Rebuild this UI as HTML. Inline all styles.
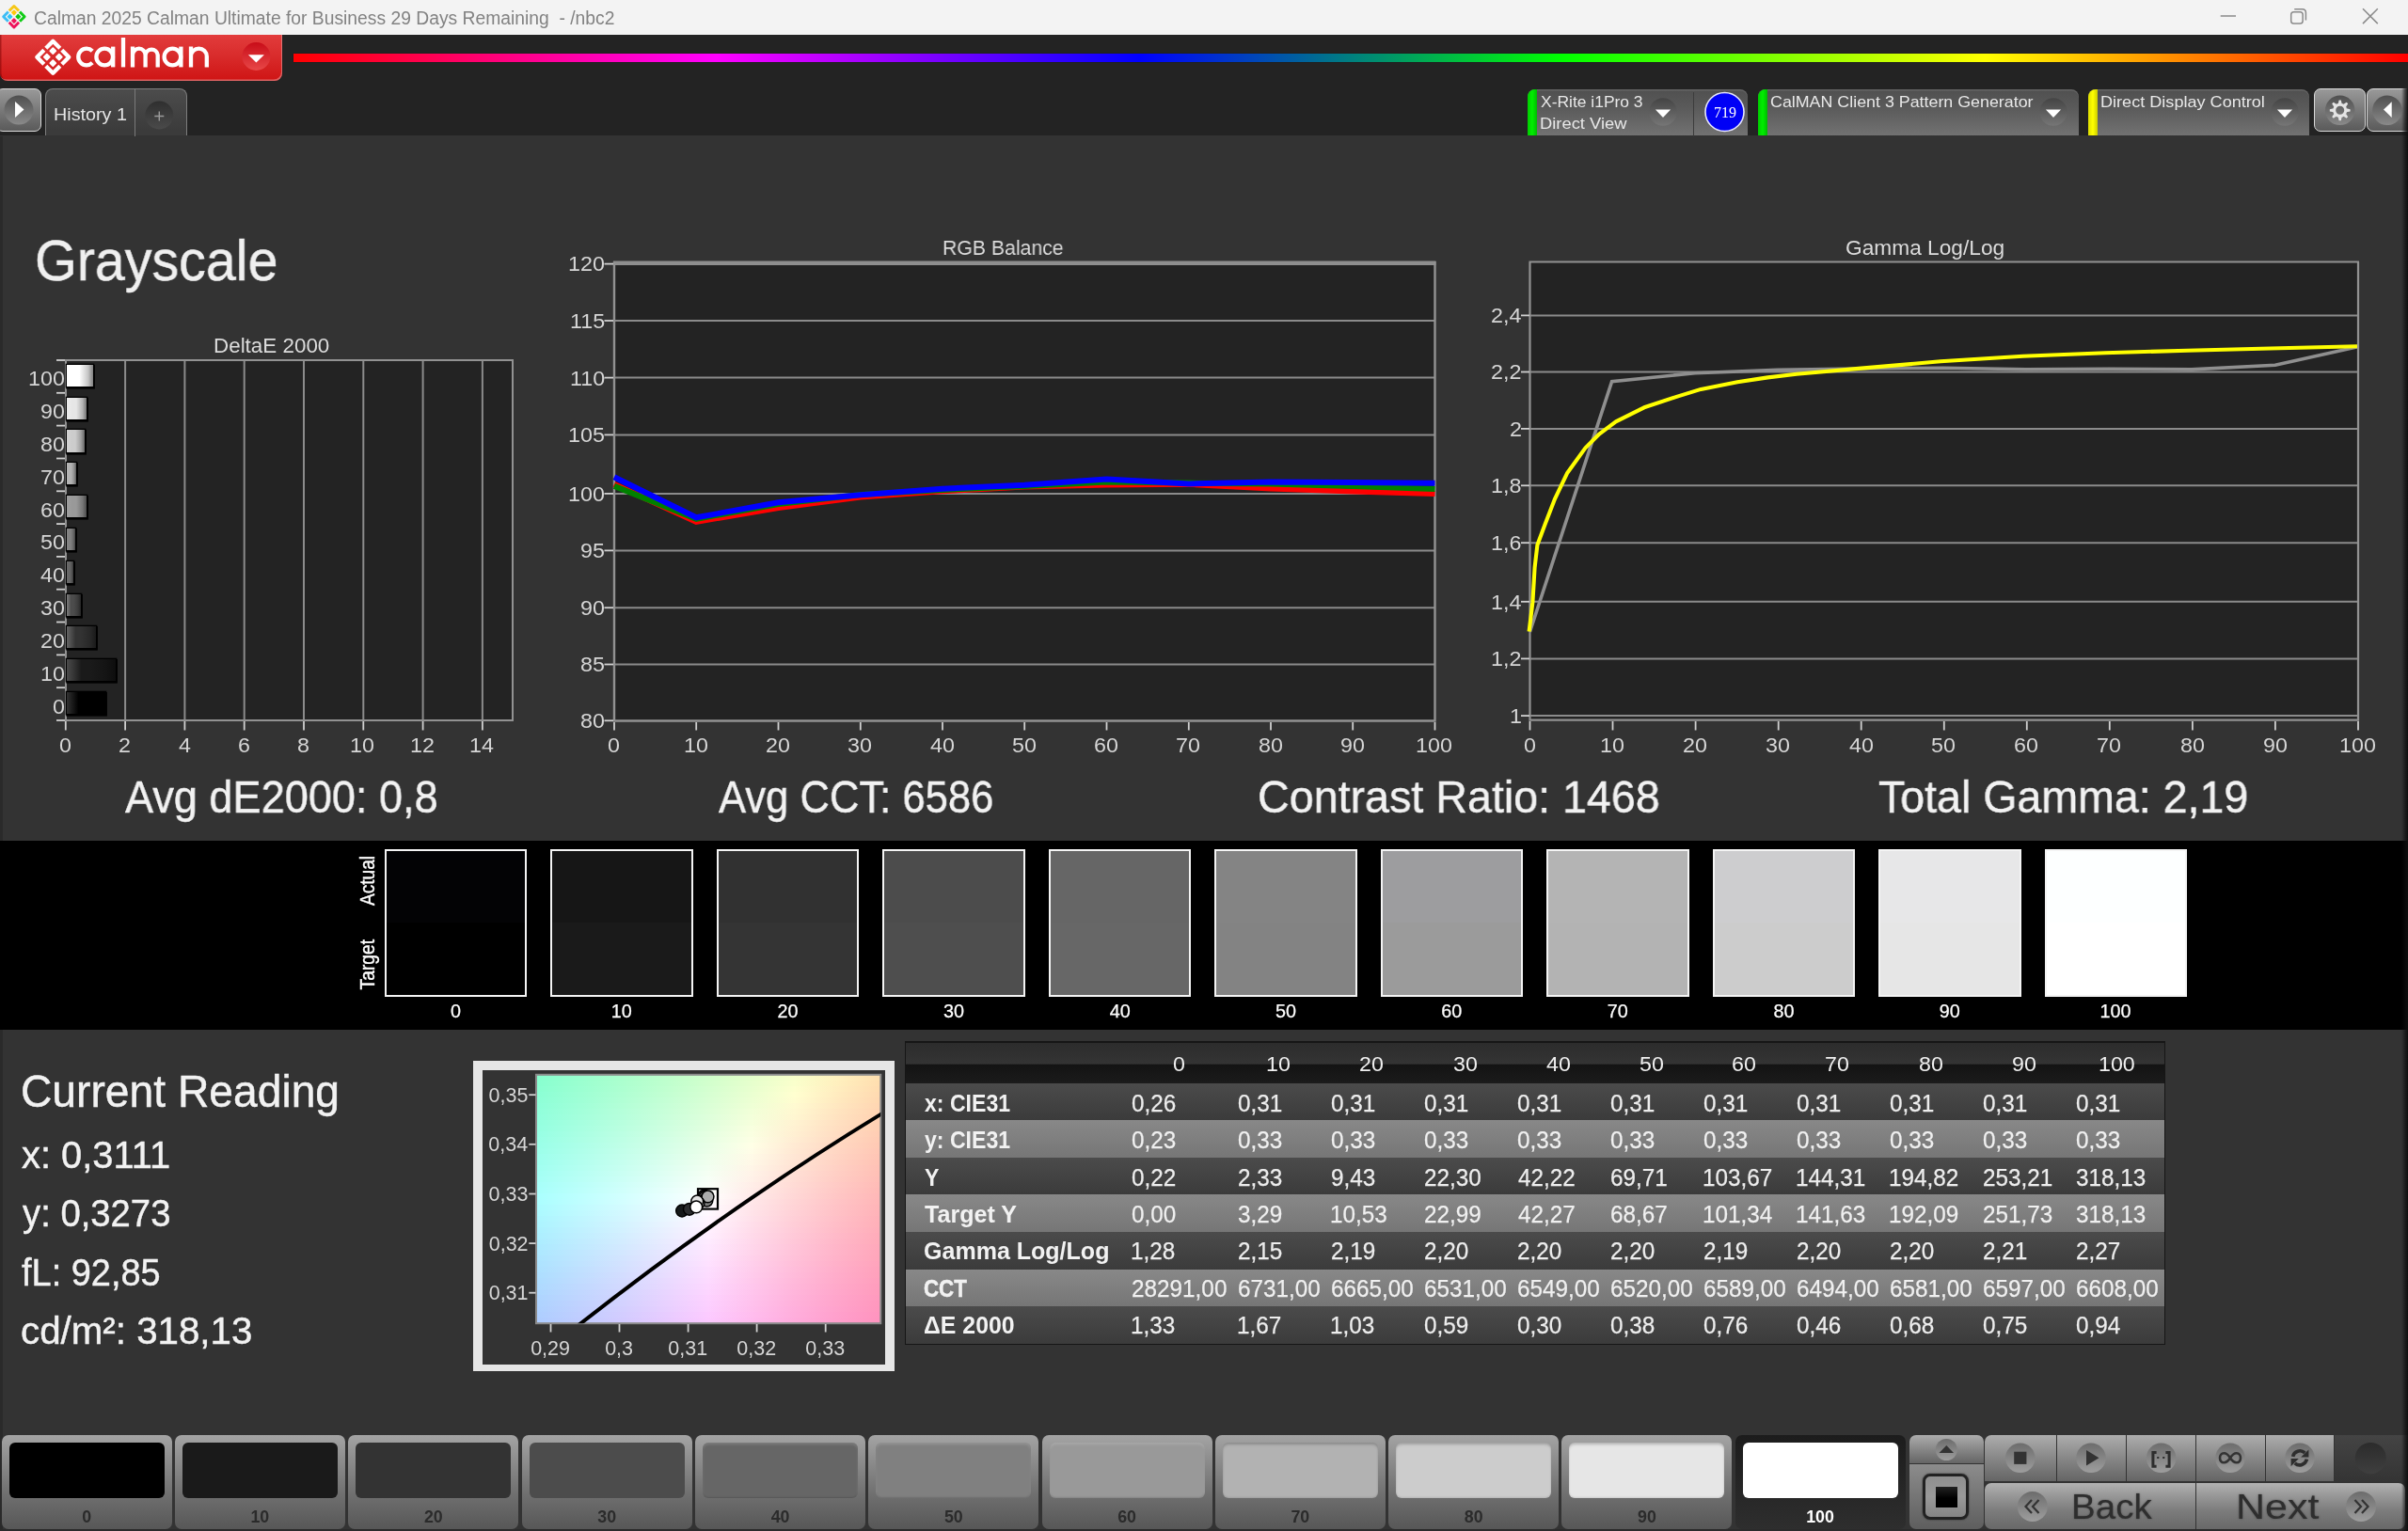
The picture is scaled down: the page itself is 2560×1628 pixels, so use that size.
<!DOCTYPE html>
<html><head><meta charset="utf-8"><title>Calman</title>
<style>
html,body{margin:0;padding:0;}
body{width:2560px;height:1628px;background:#333;overflow:hidden;position:relative;font-family:"Liberation Sans", sans-serif;}
div,svg,span.t{position:absolute;}
div div{position:absolute;}
svg{overflow:visible;}
span.t{white-space:pre;line-height:1;transform-origin:0 0;}
</style></head><body><div id="w" style="left:0;top:0;width:2560px;height:1628px;will-change:transform;overflow:hidden;">
<div style="left:0px;top:0px;width:2560px;height:37px;background:#f3f3f3;"></div>
<svg style="left:0;top:0" width="32" height="37" viewBox="0 0 32 37"><g transform="translate(14.9,17.7) rotate(45)" fill="none" stroke-width="2.9" stroke-linejoin="round" stroke-linecap="butt">
<path d="M-0.7,-7.95 H-7.95 V-0.7" stroke="#f6c715"/><rect x="-5.3" y="-5.3" width="4.4" height="4.4" rx="0.7" fill="#ffc90a"/>
<path d="M0.7,-7.95 H7.95 V-0.7" stroke="#10cc16"/><rect x="0.9" y="-5.3" width="4.4" height="4.4" rx="0.7" fill="#0ec612"/>
<path d="M7.95,0.7 V7.95 H0.7" stroke="#ee1058"/><rect x="0.9" y="0.9" width="4.4" height="4.4" rx="0.7" fill="#f01459"/>
<path d="M-7.95,0.7 V7.95 H-0.7" stroke="#3dbdf5"/><rect x="-5.3" y="0.9" width="4.4" height="4.4" rx="0.7" fill="#2ec4fa"/>
</g></svg>
<span class="t" style="left:35.84px;top:10px;font-size:19.6px;color:#828282;transform:scaleX(0.9843);">Calman 2025 Calman Ultimate for Business 29 Days Remaining  - /nbc2</span>
<svg style="left:2340px;top:0" width="220" height="37" viewBox="2340 0 220 37" fill="none" stroke="#8a8a8a" stroke-width="1.5">
<path d="M2360.7,17 H2377"/>
<rect x="2435.7" y="12.7" width="12.4" height="12.4" rx="2.8"/>
<path d="M2439.2,9.7 H2447.6 Q2451.4,9.7 2451.4,13.5 V21.5"/>
<path d="M2512,9.3 L2527.8,25.1 M2527.8,9.3 L2512,25.1"/>
</svg>
<div style="left:0px;top:37px;width:2560px;height:107.2px;background:#232323;"></div>
<div style="left:0px;top:37px;width:300px;height:48.5px;background:linear-gradient(#e23c3c 0%,#d92c2c 45%,#cf1414 100%);border-radius:0 0 8px 8px;box-shadow:inset -1px -1.5px 0 rgba(235,175,175,.5), inset 1.5px 0 0 rgba(120,0,0,.5);"></div>
<svg style="left:30px;top:37px" width="270" height="49" viewBox="30 37 270 49">
<g transform="translate(56.3,60.7) rotate(45)" stroke="#fff" fill="none" stroke-width="4.3" stroke-linecap="butt" stroke-linejoin="round">
<path d="M-1.4,-12 H-12 V-1.4 M1.4,-12 H12 V-1.4 M-12,1.4 V12 H-1.4 M12,1.4 V12 H1.4"/>
<g fill="#fff" stroke="none"><rect x="-7.6" y="-7.6" width="6" height="6" rx="0.9"/><rect x="1.6" y="-7.6" width="6" height="6" rx="0.9"/><rect x="-7.6" y="1.6" width="6" height="6" rx="0.9"/><rect x="1.6" y="1.6" width="6" height="6" rx="0.9"/></g>
</g>
<g stroke="#fff" fill="none" stroke-width="4.3" stroke-linecap="butt">
<path d="M98.2,54.2 A8.8,8.8 0 1 0 98.2,66.8"/>
<circle cx="111.2" cy="60.5" r="8.8"/><path d="M120.2,49.6 V71.4"/>
<path d="M131,40 V71.4"/>
<path d="M141,49.6 V71.4 M141,58.5 A6.8,6.8 0 0 1 154.6,58.5 V71.4 M154.6,58.5 A6.6,6.6 0 0 1 167.7,58.5 V71.4"/>
<circle cx="183.4" cy="60.5" r="8.8"/><path d="M192.4,49.6 V71.4"/>
<path d="M203,49.6 V71.4 M203,60 A8.4,8.4 0 0 1 219.8,60 V71.4"/>
</g>
<defs><linearGradient id="rdd" x1="0" y1="0" x2="0" y2="1"><stop offset="0" stop-color="#c80c18"/><stop offset="1" stop-color="#e84848"/></linearGradient></defs>
<circle cx="272.4" cy="60" r="15" fill="url(#rdd)"/>
<path d="M263.9,58.2 H280.9 L272.4,66.6 Z" fill="#fff"/>
</svg>
<div style="left:312px;top:57px;width:2248px;height:9px;background:linear-gradient(to right,#f00 0%,#f0f 20%,#00f 40%,#0f0 60%,#ff0 80%,#f00 100%);box-shadow:0 0 1px rgba(0,0,0,.6);"></div>
<div style="left:-4px;top:94.3px;width:48.2px;height:45.8px;background:linear-gradient(#999,#5a5a5a);border:1.7px solid #d8d8d8;border-radius:7px;box-sizing:border-box;"></div>
<svg style="left:0;top:94px" width="46" height="46" viewBox="0 94 46 46">
<defs><linearGradient id="pb" x1="0" y1="0" x2="0" y2="1"><stop offset="0" stop-color="#4f4f4f"/><stop offset="1" stop-color="#8a8a8a"/></linearGradient></defs>
<circle cx="20" cy="117" r="15.5" fill="url(#pb)"/><path d="M16,108 L25.5,116.5 L16,125 Z" fill="#fff"/></svg>
<div style="left:48px;top:94px;width:151px;height:50.2px;background:linear-gradient(#4c4c4c,#3b3b3b 90%);border:1.5px solid #7d7d7d;border-bottom:none;border-radius:8px 8px 0 0;box-sizing:border-box;"></div>
<div style="left:142.5px;top:95px;width:1.5px;height:50px;background:#7a7a7a;"></div>
<svg style="left:150px;top:100px" width="40" height="44" viewBox="150 100 40 44">
<defs><linearGradient id="plc" x1="0" y1="0" x2="0" y2="1"><stop offset="0" stop-color="#2f2f2f"/><stop offset="1" stop-color="#4a4a4a"/></linearGradient></defs>
<circle cx="169.3" cy="122.5" r="15" fill="url(#plc)"/><path d="M164.3,123.5 H174.3 M169.3,118.5 V128.5" stroke="#9a9a9a" stroke-width="1.4"/></svg>
<span class="t" style="left:56.78px;top:113px;font-size:18.8px;color:#e4e4e4;transform:scaleX(1.0513);">History 1</span>
<svg style="left:0;top:0" width="0" height="0"><defs><linearGradient id="ddg" x1="0" y1="0" x2="0" y2="1"><stop offset="0" stop-color="#444"/><stop offset="1" stop-color="#767676"/></linearGradient></defs></svg>
<div style="left:1624px;top:94.5px;width:234px;height:49.7px;background:linear-gradient(#505050 0%,#5a5a5a 40%,#727272 100%);border-radius:8px 8px 0 0;box-shadow:inset 0 1.5px 0 rgba(255,255,255,.12);overflow:hidden;"><div style="left:0;top:0;width:10px;height:52px;background:linear-gradient(to right,#0c0,#0e0 50%,#0b0);"></div></div>
<svg style="left:1751.8px;top:103.2px" width="32" height="32" viewBox="-16 -16 32 32">
<circle r="14.7" fill="url(#ddg)"/><path d="M-8.1,-2.4 H8.1 L0,6 Z" fill="#fff"/></svg>
<div style="left:1799.5px;top:98px;width:1.5px;height:46.5px;background:#3c3c3c;"></div>
<svg style="left:1810px;top:96px" width="48" height="48" viewBox="1810 96 48 48"><circle cx="1833.5" cy="118.95" r="20.5" fill="#0000f6" stroke="#e6e6ff" stroke-width="1.6"/></svg>
<span class="t" style="left:1803.9px;top:112px;width:60px;text-align:center;font-family:'Liberation Serif',serif;font-size:16px;color:#fff;">719</span>
<span class="t" style="left:1638.12px;top:100px;font-size:16.4px;color:#e8e8e8;transform:scaleX(1.0641);">X-Rite i1Pro 3</span>
<span class="t" style="left:1637.00px;top:123px;font-size:16.4px;color:#e8e8e8;transform:scaleX(1.1189);">Direct View</span>
<div style="left:1868.5px;top:94.5px;width:341px;height:49.7px;background:linear-gradient(#505050 0%,#5a5a5a 40%,#727272 100%);border-radius:8px 8px 0 0;box-shadow:inset 0 1.5px 0 rgba(255,255,255,.12);overflow:hidden;"><div style="left:0;top:0;width:10px;height:52px;background:linear-gradient(to right,#0c0,#0e0 50%,#0b0);"></div></div>
<svg style="left:2167px;top:103.2px" width="32" height="32" viewBox="-16 -16 32 32">
<circle r="14.7" fill="url(#ddg)"/><path d="M-8.1,-2.4 H8.1 L0,6 Z" fill="#fff"/></svg>
<span class="t" style="left:1882.11px;top:100px;font-size:16.4px;color:#e8e8e8;transform:scaleX(1.0881);">CalMAN Client 3 Pattern Generator</span>
<div style="left:2220px;top:94.5px;width:235px;height:49.7px;background:linear-gradient(#505050 0%,#5a5a5a 40%,#727272 100%);border-radius:8px 8px 0 0;box-shadow:inset 0 1.5px 0 rgba(255,255,255,.12);overflow:hidden;"><div style="left:0;top:0;width:10px;height:52px;background:linear-gradient(to right,#dd0,#ff0 50%,#cc0);"></div></div>
<svg style="left:2412.7px;top:103.2px" width="32" height="32" viewBox="-16 -16 32 32">
<circle r="14.7" fill="url(#ddg)"/><path d="M-8.1,-2.4 H8.1 L0,6 Z" fill="#fff"/></svg>
<span class="t" style="left:2233.22px;top:100px;font-size:16.4px;color:#e8e8e8;transform:scaleX(1.1035);">Direct Display Control</span>
<div style="left:2460px;top:94px;width:55.4px;height:46.3px;background:linear-gradient(#999,#5a5a5a);border:1.7px solid #d8d8d8;border-radius:7px;box-sizing:border-box;"></div>
<div style="left:2515.6px;top:94px;width:60px;height:46.3px;background:linear-gradient(#999,#5a5a5a);border:1.7px solid #d8d8d8;border-radius:7px;box-sizing:border-box;"></div>
<svg style="left:2464px;top:96px" width="96" height="44" viewBox="2464 96 96 44">
<circle cx="2487.7" cy="117.3" r="15.8" fill="url(#pb)"/>
<g transform="translate(2487.7,117.3)" fill="#e4e4e4"><circle r="6.05" fill="none" stroke="#e4e4e4" stroke-width="3.1"/><path d="M-2,-6.8 L-1.1,-10.9 H1.1 L2,-6.8 Z" transform="rotate(0)"/><path d="M-2,-6.8 L-1.1,-10.9 H1.1 L2,-6.8 Z" transform="rotate(45)"/><path d="M-2,-6.8 L-1.1,-10.9 H1.1 L2,-6.8 Z" transform="rotate(90)"/><path d="M-2,-6.8 L-1.1,-10.9 H1.1 L2,-6.8 Z" transform="rotate(135)"/><path d="M-2,-6.8 L-1.1,-10.9 H1.1 L2,-6.8 Z" transform="rotate(180)"/><path d="M-2,-6.8 L-1.1,-10.9 H1.1 L2,-6.8 Z" transform="rotate(225)"/><path d="M-2,-6.8 L-1.1,-10.9 H1.1 L2,-6.8 Z" transform="rotate(270)"/><path d="M-2,-6.8 L-1.1,-10.9 H1.1 L2,-6.8 Z" transform="rotate(315)"/></g>
<circle cx="2537.9" cy="117.3" r="15.8" fill="url(#pb)"/><path d="M2542.7,108.2 L2534,116.6 L2542.7,125 Z" fill="#fff"/>
</svg>
<div style="left:0px;top:145px;width:2.5px;height:1483px;background:#2a2a2a;"></div>
<span class="t" style="left:37.03px;top:247px;font-size:60.3px;color:#f0f0f0;transform:scaleX(0.9521);-webkit-text-stroke:0.5px #f0f0f0;">Grayscale</span>
<div style="left:70px;top:383px;width:475px;height:383px;background:#232323;"></div>
<svg style="left:0;top:370px" width="600" height="420" viewBox="0 370 600 420"><g stroke="#8b8b8b" stroke-width="2" fill="none"><path d="M133.1,383 V766"/><path d="M196.4,383 V766"/><path d="M259.7,383 V766"/><path d="M323.0,383 V766"/><path d="M386.3,383 V766"/><path d="M449.6,383 V766"/><path d="M512.9,383 V766"/><path d="M70,383 H545 M70,766 H545 M70,382 V767 M545,382 V767" stroke="#929292"/></g><g stroke="#d0d0d0" stroke-width="1.8"><path d="M60,383.0 H69"/><path d="M60,417.8 H69"/><path d="M60,452.6 H69"/><path d="M60,487.5 H69"/><path d="M60,522.3 H69"/><path d="M60,557.1 H69"/><path d="M60,591.9 H69"/><path d="M60,626.7 H69"/><path d="M60,661.5 H69"/><path d="M60,696.4 H69"/><path d="M60,731.2 H69"/><path d="M60,766.0 H69"/><path d="M69.8,767 V776.5"/><path d="M133.1,767 V776.5"/><path d="M196.4,767 V776.5"/><path d="M259.7,767 V776.5"/><path d="M323.0,767 V776.5"/><path d="M386.3,767 V776.5"/><path d="M449.6,767 V776.5"/><path d="M512.9,767 V776.5"/></g></svg>
<div style="left:71px;top:387.809px;width:27.7px;height:23.1px;background:linear-gradient(to right,#ffffff 0%,#ffffff 30%,#ffffff 48%,#c7c7c7 80%,#808080 100%);box-shadow:0 0 0 1.3px #000, 0.6px 1.3px 0 1.3px #000;"></div>
<span class="t" style="left:30.32px;top:392px;font-size:22.3px;color:#d6d6d6;transform:scaleX(1.0450);">100</span>
<div style="left:71px;top:422.627px;width:21.4px;height:23.1px;background:linear-gradient(to right,#ececec 0%,#e6e6e6 30%,#e6e6e6 48%,#b3b3b3 80%,#737373 100%);box-shadow:0 0 0 1.3px #000, 0.6px 1.3px 0 1.3px #000;"></div>
<span class="t" style="left:43.27px;top:427px;font-size:22.3px;color:#d6d6d6;transform:scaleX(1.0450);">90</span>
<div style="left:71px;top:457.445px;width:19.2px;height:23.1px;background:linear-gradient(to right,#d2d2d2 0%,#cccccc 30%,#cccccc 48%,#9f9f9f 80%,#666666 100%);box-shadow:0 0 0 1.3px #000, 0.6px 1.3px 0 1.3px #000;"></div>
<span class="t" style="left:43.27px;top:462px;font-size:22.3px;color:#d6d6d6;transform:scaleX(1.0450);">80</span>
<div style="left:71px;top:492.264px;width:10.3px;height:23.1px;background:linear-gradient(to right,#b8b8b8 0%,#b2b2b2 30%,#b2b2b2 48%,#8b8b8b 80%,#595959 100%);box-shadow:0 0 0 1.3px #000, 0.6px 1.3px 0 1.3px #000;"></div>
<span class="t" style="left:43.27px;top:497px;font-size:22.3px;color:#d6d6d6;transform:scaleX(1.0450);">70</span>
<div style="left:71px;top:527.082px;width:21.4px;height:23.1px;background:linear-gradient(to right,#9f9f9f 0%,#999999 30%,#999999 48%,#777777 80%,#4c4c4c 100%);box-shadow:0 0 0 1.3px #000, 0.6px 1.3px 0 1.3px #000;"></div>
<span class="t" style="left:43.27px;top:532px;font-size:22.3px;color:#d6d6d6;transform:scaleX(1.0450);">60</span>
<div style="left:71px;top:561.9px;width:8.8px;height:23.1px;background:linear-gradient(to right,#868686 0%,#808080 30%,#808080 48%,#646464 80%,#404040 100%);box-shadow:0 0 0 1.3px #000, 0.6px 1.3px 0 1.3px #000;"></div>
<span class="t" style="left:43.27px;top:566px;font-size:22.3px;color:#d6d6d6;transform:scaleX(1.0450);">50</span>
<div style="left:71px;top:596.718px;width:6.8px;height:23.1px;background:linear-gradient(to right,#6c6c6c 0%,#666666 30%,#666666 48%,#505050 80%,#333333 100%);box-shadow:0 0 0 1.3px #000, 0.6px 1.3px 0 1.3px #000;"></div>
<span class="t" style="left:43.27px;top:601px;font-size:22.3px;color:#d6d6d6;transform:scaleX(1.0450);">40</span>
<div style="left:71px;top:631.536px;width:15.2px;height:23.1px;background:linear-gradient(to right,#7e7e7e 0%,#4c4c4c 30%,#4c4c4c 48%,#3b3b3b 80%,#262626 100%);box-shadow:0 0 0 1.3px #000, 0.6px 1.3px 0 1.3px #000;"></div>
<span class="t" style="left:43.27px;top:636px;font-size:22.3px;color:#d6d6d6;transform:scaleX(1.0450);">30</span>
<div style="left:71px;top:666.355px;width:30.9px;height:23.1px;background:linear-gradient(to right,#656565 0%,#333333 30%,#333333 48%,#282828 80%,#1a1a1a 100%);box-shadow:0 0 0 1.3px #000, 0.6px 1.3px 0 1.3px #000;"></div>
<span class="t" style="left:43.27px;top:671px;font-size:22.3px;color:#d6d6d6;transform:scaleX(1.0450);">20</span>
<div style="left:71px;top:701.173px;width:51.6px;height:23.1px;background:linear-gradient(to right,#4c4c4c 0%,#1a1a1a 30%,#1a1a1a 48%,#141414 80%,#0d0d0d 100%);box-shadow:0 0 0 1.3px #000, 0.6px 1.3px 0 1.3px #000;"></div>
<span class="t" style="left:43.27px;top:706px;font-size:22.3px;color:#d6d6d6;transform:scaleX(1.0450);">10</span>
<div style="left:71px;top:735.991px;width:41px;height:23.1px;background:linear-gradient(to right,#323232 0%,#000000 30%,#000000 48%,#000000 80%,#000000 100%);box-shadow:0 0 0 1.3px #000, 0.6px 1.3px 0 1.3px #000;"></div>
<span class="t" style="left:56.23px;top:741px;font-size:22.3px;color:#d6d6d6;transform:scaleX(1.0450);">0</span>
<span class="t" style="left:62.81px;top:782px;font-size:22.3px;color:#d6d6d6;transform:scaleX(1.0450);">0</span>
<span class="t" style="left:126.12px;top:782px;font-size:22.3px;color:#d6d6d6;transform:scaleX(1.0450);">2</span>
<span class="t" style="left:189.50px;top:782px;font-size:22.3px;color:#d6d6d6;transform:scaleX(1.0450);">4</span>
<span class="t" style="left:252.64px;top:782px;font-size:22.3px;color:#d6d6d6;transform:scaleX(1.0450);">6</span>
<span class="t" style="left:316.02px;top:782px;font-size:22.3px;color:#d6d6d6;transform:scaleX(1.0450);">8</span>
<span class="t" style="left:372.40px;top:782px;font-size:22.3px;color:#d6d6d6;transform:scaleX(1.0450);">10</span>
<span class="t" style="left:435.84px;top:782px;font-size:22.3px;color:#d6d6d6;transform:scaleX(1.0450);">12</span>
<span class="t" style="left:498.90px;top:782px;font-size:22.3px;color:#d6d6d6;transform:scaleX(1.0450);">14</span>
<span class="t" style="left:226.86px;top:357px;font-size:22.2px;color:#dcdcdc;transform:scaleX(1.0098);">DeltaE 2000</span>
<div style="left:653px;top:278px;width:872.5px;height:488.5px;background:#232323;"></div>
<svg style="left:600px;top:260px" width="960" height="530" viewBox="600 260 960 530"><g stroke="#8b8b8b" stroke-width="2" fill="none"><path d="M653,706.5 H1525.5"/><path d="M653,646.2 H1525.5"/><path d="M653,585.4 H1525.5"/><path d="M653,524.9 H1525.5"/><path d="M653,462.4 H1525.5"/><path d="M653,401.6 H1525.5"/><path d="M653,341.0 H1525.5"/><path d="M652,279.8 H1526.5" stroke-width="4.6" stroke="#8e8e8e"/><path d="M653,278 V767.5 M1525.5,278 V767.5 M652,766.5 H1526.5" stroke="#929292" stroke-width="2.4"/></g><g stroke="#d0d0d0" stroke-width="1.8"><path d="M642.5,766.3 H652"/><path d="M642.5,706.5 H652"/><path d="M642.5,646.2 H652"/><path d="M642.5,585.4 H652"/><path d="M642.5,524.9 H652"/><path d="M642.5,462.4 H652"/><path d="M642.5,401.6 H652"/><path d="M642.5,341.0 H652"/><path d="M642.5,280.6 H652"/><path d="M653.0,768 V776.5"/><path d="M740.2,768 V776.5"/><path d="M827.5,768 V776.5"/><path d="M914.8,768 V776.5"/><path d="M1002.0,768 V776.5"/><path d="M1089.2,768 V776.5"/><path d="M1176.5,768 V776.5"/><path d="M1263.8,768 V776.5"/><path d="M1351.0,768 V776.5"/><path d="M1438.2,768 V776.5"/><path d="M1525.5,768 V776.5"/></g><clipPath id="rgbclip"><rect x="652" y="281" width="874.5" height="485.5"/></clipPath><polyline points="653.0,514.9 740.2,554.8 827.5,540.0 914.8,528.5 1002.0,522.3 1089.2,517.5 1176.5,515.4 1263.8,514.8 1351.0,519.4 1438.2,522.4 1525.5,525.0" fill="none" stroke="#ff0000" stroke-width="6" stroke-linejoin="miter" clip-path="url(#rgbclip)"/><polyline points="653.0,516.9 740.2,551.8 827.5,536.0 914.8,525.9 1002.0,521.0 1089.2,516.9 1176.5,512.4 1263.8,513.6 1351.0,514.4 1438.2,516.9 1525.5,519.9" fill="none" stroke="#008000" stroke-width="6" stroke-linejoin="miter" clip-path="url(#rgbclip)"/><polyline points="653.0,507.3 740.2,550.3 827.5,534.3 914.8,526.3 1002.0,519.7 1089.2,515.7 1176.5,509.4 1263.8,514.4 1351.0,512.6 1438.2,512.9 1525.5,513.7" fill="none" stroke="#0000ff" stroke-width="6" stroke-linejoin="miter" clip-path="url(#rgbclip)"/></svg>
<span class="t" style="left:617.37px;top:756px;font-size:22.3px;color:#d6d6d6;transform:scaleX(1.0450);">80</span>
<span class="t" style="left:617.44px;top:696px;font-size:22.3px;color:#d6d6d6;transform:scaleX(1.0450);">85</span>
<span class="t" style="left:617.37px;top:636px;font-size:22.3px;color:#d6d6d6;transform:scaleX(1.0450);">90</span>
<span class="t" style="left:617.44px;top:575px;font-size:22.3px;color:#d6d6d6;transform:scaleX(1.0450);">95</span>
<span class="t" style="left:604.42px;top:515px;font-size:22.3px;color:#d6d6d6;transform:scaleX(1.0450);">100</span>
<span class="t" style="left:604.49px;top:452px;font-size:22.3px;color:#d6d6d6;transform:scaleX(1.0450);">105</span>
<span class="t" style="left:606.14px;top:392px;font-size:22.3px;color:#d6d6d6;transform:scaleX(1.0450);">110</span>
<span class="t" style="left:606.21px;top:331px;font-size:22.3px;color:#d6d6d6;transform:scaleX(1.0450);">115</span>
<span class="t" style="left:604.42px;top:270px;font-size:22.3px;color:#d6d6d6;transform:scaleX(1.0450);">120</span>
<span class="t" style="left:646.21px;top:782px;font-size:22.3px;color:#d6d6d6;transform:scaleX(1.0450);">0</span>
<span class="t" style="left:726.55px;top:782px;font-size:22.3px;color:#d6d6d6;transform:scaleX(1.0450);">10</span>
<span class="t" style="left:814.10px;top:782px;font-size:22.3px;color:#d6d6d6;transform:scaleX(1.0450);">20</span>
<span class="t" style="left:901.49px;top:782px;font-size:22.3px;color:#d6d6d6;transform:scaleX(1.0450);">30</span>
<span class="t" style="left:988.93px;top:782px;font-size:22.3px;color:#d6d6d6;transform:scaleX(1.0450);">40</span>
<span class="t" style="left:1075.97px;top:782px;font-size:22.3px;color:#d6d6d6;transform:scaleX(1.0450);">50</span>
<span class="t" style="left:1163.10px;top:782px;font-size:22.3px;color:#d6d6d6;transform:scaleX(1.0450);">60</span>
<span class="t" style="left:1250.34px;top:782px;font-size:22.3px;color:#d6d6d6;transform:scaleX(1.0450);">70</span>
<span class="t" style="left:1337.68px;top:782px;font-size:22.3px;color:#d6d6d6;transform:scaleX(1.0450);">80</span>
<span class="t" style="left:1424.90px;top:782px;font-size:22.3px;color:#d6d6d6;transform:scaleX(1.0450);">90</span>
<span class="t" style="left:1505.32px;top:782px;font-size:22.3px;color:#d6d6d6;transform:scaleX(1.0450);">100</span>
<span class="t" style="left:1001.76px;top:253px;font-size:22.2px;color:#dcdcdc;transform:scaleX(0.9568);">RGB Balance</span>
<div style="left:1626.5px;top:278.5px;width:880.5px;height:487.2px;background:#232323;"></div>
<svg style="left:1570px;top:260px" width="990" height="530" viewBox="1570 260 990 530"><g stroke="#8b8b8b" stroke-width="2" fill="none"><path d="M1626.5,761.1 H2507"/><path d="M1626.5,700.4 H2507"/><path d="M1626.5,639.8 H2507"/><path d="M1626.5,577.2 H2507"/><path d="M1626.5,516.3 H2507"/><path d="M1626.5,455.9 H2507"/><path d="M1626.5,395.5 H2507"/><path d="M1626.5,335.4 H2507"/><path d="M1625.5,278.5 H2508 M1625.5,765.7 H2508 M1626.5,278.5 V766.7 M2507,278.5 V766.7" stroke="#929292" stroke-width="2.2"/></g><g stroke="#d0d0d0" stroke-width="1.8"><path d="M1617,761.1 H1626"/><path d="M1617,700.4 H1626"/><path d="M1617,639.8 H1626"/><path d="M1617,577.2 H1626"/><path d="M1617,516.3 H1626"/><path d="M1617,455.9 H1626"/><path d="M1617,395.5 H1626"/><path d="M1617,335.4 H1626"/><path d="M1626.5,767 V776.5"/><path d="M1714.5,767 V776.5"/><path d="M1802.6,767 V776.5"/><path d="M1890.7,767 V776.5"/><path d="M1978.7,767 V776.5"/><path d="M2066.8,767 V776.5"/><path d="M2154.8,767 V776.5"/><path d="M2242.8,767 V776.5"/><path d="M2330.9,767 V776.5"/><path d="M2418.9,767 V776.5"/><path d="M2507.0,767 V776.5"/></g><polyline points="1626.4,672 1713.6,405.7 1802,396.7 1890,393.4 1978,392 2066,391.2 2154,392.8 2242,392.2 2330,392.9 2418.8,388.3 2506.5,368.7" fill="none" stroke="#8f8f8f" stroke-width="3.6" stroke-linejoin="miter"/><polyline points="1625.6,671.4 1629.4,640.2 1631.6,603.5 1634.4,579.5 1642.3,558.3 1653.1,530.3 1666,503.3 1685.4,476.4 1700.5,461.3 1717.8,448.4 1747.9,433.3 1782.4,421.9 1808.3,413.9 1847.1,406.3 1879.4,401.4 1910,397.7 1975.8,391.9 2063,384.3 2150.8,378.8 2238,375.3 2325.9,372.7 2413.4,370.5 2506,368.3" fill="none" stroke="#ffff00" stroke-width="4.1" stroke-linejoin="round"/></svg>
<span class="t" style="left:1604.56px;top:751px;font-size:22.3px;color:#d6d6d6;transform:scaleX(1.0450);">1</span>
<span class="t" style="left:1585.17px;top:690px;font-size:22.3px;color:#d6d6d6;transform:scaleX(1.0450);">1,2</span>
<span class="t" style="left:1584.68px;top:630px;font-size:22.3px;color:#d6d6d6;transform:scaleX(1.0450);">1,4</span>
<span class="t" style="left:1585.01px;top:567px;font-size:22.3px;color:#d6d6d6;transform:scaleX(1.0450);">1,6</span>
<span class="t" style="left:1585.01px;top:506px;font-size:22.3px;color:#d6d6d6;transform:scaleX(1.0450);">1,8</span>
<span class="t" style="left:1604.61px;top:446px;font-size:22.3px;color:#d6d6d6;transform:scaleX(1.0450);">2</span>
<span class="t" style="left:1585.17px;top:385px;font-size:22.3px;color:#d6d6d6;transform:scaleX(1.0450);">2,2</span>
<span class="t" style="left:1584.68px;top:325px;font-size:22.3px;color:#d6d6d6;transform:scaleX(1.0450);">2,4</span>
<span class="t" style="left:1619.71px;top:782px;font-size:22.3px;color:#d6d6d6;transform:scaleX(1.0450);">0</span>
<span class="t" style="left:1700.85px;top:782px;font-size:22.3px;color:#d6d6d6;transform:scaleX(1.0450);">10</span>
<span class="t" style="left:1789.20px;top:782px;font-size:22.3px;color:#d6d6d6;transform:scaleX(1.0450);">20</span>
<span class="t" style="left:1877.39px;top:782px;font-size:22.3px;color:#d6d6d6;transform:scaleX(1.0450);">30</span>
<span class="t" style="left:1965.63px;top:782px;font-size:22.3px;color:#d6d6d6;transform:scaleX(1.0450);">40</span>
<span class="t" style="left:2053.47px;top:782px;font-size:22.3px;color:#d6d6d6;transform:scaleX(1.0450);">50</span>
<span class="t" style="left:2141.40px;top:782px;font-size:22.3px;color:#d6d6d6;transform:scaleX(1.0450);">60</span>
<span class="t" style="left:2229.44px;top:782px;font-size:22.3px;color:#d6d6d6;transform:scaleX(1.0450);">70</span>
<span class="t" style="left:2317.58px;top:782px;font-size:22.3px;color:#d6d6d6;transform:scaleX(1.0450);">80</span>
<span class="t" style="left:2405.60px;top:782px;font-size:22.3px;color:#d6d6d6;transform:scaleX(1.0450);">90</span>
<span class="t" style="left:2486.82px;top:782px;font-size:22.3px;color:#d6d6d6;transform:scaleX(1.0450);">100</span>
<span class="t" style="left:1962.36px;top:253px;font-size:22.2px;color:#dcdcdc;transform:scaleX(1.0237);">Gamma Log/Log</span>
<span class="t" style="left:132.81px;top:824px;font-size:47.7px;color:#f2f2f2;transform:scaleX(0.9457);-webkit-text-stroke:0.45px #f2f2f2;">Avg dE2000: 0,8</span>
<span class="t" style="left:764.41px;top:824px;font-size:47.7px;color:#f2f2f2;transform:scaleX(0.9142);-webkit-text-stroke:0.45px #f2f2f2;">Avg CCT: 6586</span>
<span class="t" style="left:1336.57px;top:824px;font-size:47.7px;color:#f2f2f2;transform:scaleX(0.9781);-webkit-text-stroke:0.45px #f2f2f2;">Contrast Ratio: 1468</span>
<span class="t" style="left:1996.68px;top:824px;font-size:47.7px;color:#f2f2f2;transform:scaleX(0.9763);-webkit-text-stroke:0.45px #f2f2f2;">Total Gamma: 2,19</span>
<div style="left:0px;top:894px;width:2560px;height:200.7px;background:#000;"></div>
<div style="left:408.8px;top:902.6px;width:151.6px;height:157.6px;box-sizing:border-box;border:2px solid #f4f4f4;background:linear-gradient(#030305 0,#030305 50%,#000000 50%,#000000 100%);"></div>
<span class="t" style="left:479.09px;top:1066px;font-size:19.8px;color:#fff;-webkit-text-stroke:0.25px #fff;">0</span>
<div style="left:585.28px;top:902.6px;width:151.6px;height:157.6px;box-sizing:border-box;border:2px solid #f4f4f4;background:linear-gradient(#161616 0,#161616 50%,#1a1a1a 50%,#1a1a1a 100%);"></div>
<span class="t" style="left:649.69px;top:1066px;font-size:19.8px;color:#fff;-webkit-text-stroke:0.25px #fff;">10</span>
<div style="left:761.76px;top:902.6px;width:151.6px;height:157.6px;box-sizing:border-box;border:2px solid #f4f4f4;background:linear-gradient(#313131 0,#313131 50%,#343434 50%,#343434 100%);"></div>
<span class="t" style="left:826.43px;top:1066px;font-size:19.8px;color:#fff;-webkit-text-stroke:0.25px #fff;">20</span>
<div style="left:938.24px;top:902.6px;width:151.6px;height:157.6px;box-sizing:border-box;border:2px solid #f4f4f4;background:linear-gradient(#4c4c4c 0,#4c4c4c 50%,#4e4e4e 50%,#4e4e4e 100%);"></div>
<span class="t" style="left:1003.03px;top:1066px;font-size:19.8px;color:#fff;-webkit-text-stroke:0.25px #fff;">30</span>
<div style="left:1114.72px;top:902.6px;width:151.6px;height:157.6px;box-sizing:border-box;border:2px solid #f4f4f4;background:linear-gradient(#666666 0,#666666 50%,#676767 50%,#676767 100%);"></div>
<span class="t" style="left:1179.67px;top:1066px;font-size:19.8px;color:#fff;-webkit-text-stroke:0.25px #fff;">40</span>
<div style="left:1291.2px;top:902.6px;width:151.6px;height:157.6px;box-sizing:border-box;border:2px solid #f4f4f4;background:linear-gradient(#848484 0,#848484 50%,#838383 50%,#838383 100%);"></div>
<span class="t" style="left:1355.97px;top:1066px;font-size:19.8px;color:#fff;-webkit-text-stroke:0.25px #fff;">50</span>
<div style="left:1467.68px;top:902.6px;width:151.6px;height:157.6px;box-sizing:border-box;border:2px solid #f4f4f4;background:linear-gradient(#9d9d9f 0,#9d9d9f 50%,#9b9b9b 50%,#9b9b9b 100%);"></div>
<span class="t" style="left:1532.35px;top:1066px;font-size:19.8px;color:#fff;-webkit-text-stroke:0.25px #fff;">60</span>
<div style="left:1644.16px;top:902.6px;width:151.6px;height:157.6px;box-sizing:border-box;border:2px solid #f4f4f4;background:linear-gradient(#b4b4b4 0,#b4b4b4 50%,#b3b3b3 50%,#b3b3b3 100%);"></div>
<span class="t" style="left:1708.82px;top:1066px;font-size:19.8px;color:#fff;-webkit-text-stroke:0.25px #fff;">70</span>
<div style="left:1820.64px;top:902.6px;width:151.6px;height:157.6px;box-sizing:border-box;border:2px solid #f4f4f4;background:linear-gradient(#cdcdcf 0,#cdcdcf 50%,#cccccc 50%,#cccccc 100%);"></div>
<span class="t" style="left:1885.38px;top:1066px;font-size:19.8px;color:#fff;-webkit-text-stroke:0.25px #fff;">80</span>
<div style="left:1997.12px;top:902.6px;width:151.6px;height:157.6px;box-sizing:border-box;border:2px solid #f4f4f4;background:linear-gradient(#e7e7e8 0,#e7e7e8 50%,#e6e6e6 50%,#e6e6e6 100%);"></div>
<span class="t" style="left:2061.83px;top:1066px;font-size:19.8px;color:#fff;-webkit-text-stroke:0.25px #fff;">90</span>
<div style="left:2173.6px;top:902.6px;width:151.6px;height:157.6px;box-sizing:border-box;border:2px solid #f4f4f4;background:linear-gradient(#fdffff 0,#fdffff 50%,#ffffff 50%,#ffffff 100%);"></div>
<span class="t" style="left:2232.51px;top:1066px;font-size:19.8px;color:#fff;-webkit-text-stroke:0.25px #fff;">100</span>
<span class="t" style="left:398.5px;top:963px;font-size:22.2px;color:#fff;-webkit-text-stroke:0.4px #fff;transform:rotate(-90deg) scaleX(0.8607) translate(-0.04px,-18.79px);">Actual</span>
<span class="t" style="left:398.5px;top:1052px;font-size:22.2px;color:#fff;-webkit-text-stroke:0.4px #fff;transform:rotate(-90deg) scaleX(0.8681) translate(-0.49px,-18.79px);">Target</span>
<span class="t" style="left:22.49px;top:1137px;font-size:47.8px;color:#f2f2f2;transform:scaleX(0.9668);-webkit-text-stroke:0.45px #f2f2f2;">Current Reading</span>
<span class="t" style="left:22.76px;top:1209px;font-size:40.3px;color:#f2f2f2;transform:scaleX(0.9895);-webkit-text-stroke:0.45px #f2f2f2;">x: 0,3111</span>
<span class="t" style="left:23.62px;top:1271px;font-size:40.3px;color:#f2f2f2;transform:scaleX(0.9495);-webkit-text-stroke:0.45px #f2f2f2;">y: 0,3273</span>
<span class="t" style="left:23.37px;top:1334px;font-size:40.3px;color:#f2f2f2;transform:scaleX(0.9416);-webkit-text-stroke:0.45px #f2f2f2;">fL: 92,85</span>
<span class="t" style="left:22.01px;top:1396px;font-size:40.3px;color:#f2f2f2;-webkit-text-stroke:0.45px #f2f2f2;">cd/m²: 318,13</span>
<div style="left:502.8px;top:1128.4px;width:448.6px;height:329.3px;background:#e6e6e6;"></div>
<div style="left:513.2px;top:1138.4px;width:427.8px;height:312.8px;background:#333;"></div>
<svg style="left:570.0px;top:1142.8px" width="366.3" height="264.4" viewBox="570.0 1142.8 366.3 264.4" shape-rendering="crispEdges"><defs><linearGradient id="c0"><stop offset="0.000" stop-color="#87ffce"/><stop offset="0.125" stop-color="#98ffce"/><stop offset="0.250" stop-color="#aaffcd"/><stop offset="0.375" stop-color="#bdffcc"/><stop offset="0.500" stop-color="#d0ffcb"/><stop offset="0.625" stop-color="#e4ffca"/><stop offset="0.750" stop-color="#f8ffca"/><stop offset="0.875" stop-color="#fff1be"/><stop offset="1.000" stop-color="#ffdfaf"/></linearGradient><linearGradient id="c1"><stop offset="0.000" stop-color="#88ffd0"/><stop offset="0.125" stop-color="#9affd0"/><stop offset="0.250" stop-color="#acffcf"/><stop offset="0.375" stop-color="#beffce"/><stop offset="0.500" stop-color="#d2ffcd"/><stop offset="0.625" stop-color="#e6ffcd"/><stop offset="0.750" stop-color="#faffcc"/><stop offset="0.875" stop-color="#ffefbe"/><stop offset="1.000" stop-color="#ffddaf"/></linearGradient><linearGradient id="c2"><stop offset="0.000" stop-color="#8affd2"/><stop offset="0.125" stop-color="#9bffd2"/><stop offset="0.250" stop-color="#adffd1"/><stop offset="0.375" stop-color="#c0ffd0"/><stop offset="0.500" stop-color="#d4ffd0"/><stop offset="0.625" stop-color="#e8ffcf"/><stop offset="0.750" stop-color="#fdffce"/><stop offset="0.875" stop-color="#ffedbf"/><stop offset="1.000" stop-color="#ffdbaf"/></linearGradient><linearGradient id="c3"><stop offset="0.000" stop-color="#8bffd5"/><stop offset="0.125" stop-color="#9dffd4"/><stop offset="0.250" stop-color="#afffd3"/><stop offset="0.375" stop-color="#c2ffd2"/><stop offset="0.500" stop-color="#d6ffd2"/><stop offset="0.625" stop-color="#eaffd1"/><stop offset="0.750" stop-color="#ffffd0"/><stop offset="0.875" stop-color="#ffebbf"/><stop offset="1.000" stop-color="#ffd9b0"/></linearGradient><linearGradient id="c4"><stop offset="0.000" stop-color="#8dffd7"/><stop offset="0.125" stop-color="#9effd6"/><stop offset="0.250" stop-color="#b1ffd5"/><stop offset="0.375" stop-color="#c4ffd5"/><stop offset="0.500" stop-color="#d8ffd4"/><stop offset="0.625" stop-color="#ecffd3"/><stop offset="0.750" stop-color="#fffdd0"/><stop offset="0.875" stop-color="#ffe9bf"/><stop offset="1.000" stop-color="#ffd7b0"/></linearGradient><linearGradient id="c5"><stop offset="0.000" stop-color="#8effd9"/><stop offset="0.125" stop-color="#a0ffd8"/><stop offset="0.250" stop-color="#b3ffd7"/><stop offset="0.375" stop-color="#c6ffd7"/><stop offset="0.500" stop-color="#daffd6"/><stop offset="0.625" stop-color="#eeffd5"/><stop offset="0.750" stop-color="#fffad1"/><stop offset="0.875" stop-color="#ffe7c0"/><stop offset="1.000" stop-color="#ffd5b1"/></linearGradient><linearGradient id="c6"><stop offset="0.000" stop-color="#90ffdb"/><stop offset="0.125" stop-color="#a2ffda"/><stop offset="0.250" stop-color="#b5ffda"/><stop offset="0.375" stop-color="#c8ffd9"/><stop offset="0.500" stop-color="#dcffd8"/><stop offset="0.625" stop-color="#f1ffd8"/><stop offset="0.750" stop-color="#fff8d1"/><stop offset="0.875" stop-color="#ffe4c0"/><stop offset="1.000" stop-color="#ffd3b1"/></linearGradient><linearGradient id="c7"><stop offset="0.000" stop-color="#91ffdd"/><stop offset="0.125" stop-color="#a4ffdc"/><stop offset="0.250" stop-color="#b6ffdc"/><stop offset="0.375" stop-color="#caffdb"/><stop offset="0.500" stop-color="#deffdb"/><stop offset="0.625" stop-color="#f3ffda"/><stop offset="0.750" stop-color="#fff6d1"/><stop offset="0.875" stop-color="#ffe2c0"/><stop offset="1.000" stop-color="#ffd1b1"/></linearGradient><linearGradient id="c8"><stop offset="0.000" stop-color="#93ffdf"/><stop offset="0.125" stop-color="#a5ffdf"/><stop offset="0.250" stop-color="#b8ffde"/><stop offset="0.375" stop-color="#ccffde"/><stop offset="0.500" stop-color="#e0ffdd"/><stop offset="0.625" stop-color="#f5ffdc"/><stop offset="0.750" stop-color="#fff3d2"/><stop offset="0.875" stop-color="#ffe0c1"/><stop offset="1.000" stop-color="#ffcfb2"/></linearGradient><linearGradient id="c9"><stop offset="0.000" stop-color="#94ffe1"/><stop offset="0.125" stop-color="#a7ffe1"/><stop offset="0.250" stop-color="#baffe0"/><stop offset="0.375" stop-color="#ceffe0"/><stop offset="0.500" stop-color="#e2ffdf"/><stop offset="0.625" stop-color="#f8ffdf"/><stop offset="0.750" stop-color="#fff1d2"/><stop offset="0.875" stop-color="#ffdec1"/><stop offset="1.000" stop-color="#ffceb2"/></linearGradient><linearGradient id="c10"><stop offset="0.000" stop-color="#96ffe4"/><stop offset="0.125" stop-color="#a9ffe3"/><stop offset="0.250" stop-color="#bcffe3"/><stop offset="0.375" stop-color="#d0ffe2"/><stop offset="0.500" stop-color="#e5ffe2"/><stop offset="0.625" stop-color="#faffe1"/><stop offset="0.750" stop-color="#ffefd2"/><stop offset="0.875" stop-color="#ffdcc2"/><stop offset="1.000" stop-color="#ffccb3"/></linearGradient><linearGradient id="c11"><stop offset="0.000" stop-color="#98ffe6"/><stop offset="0.125" stop-color="#abffe5"/><stop offset="0.250" stop-color="#beffe5"/><stop offset="0.375" stop-color="#d2ffe5"/><stop offset="0.500" stop-color="#e7ffe4"/><stop offset="0.625" stop-color="#fcffe4"/><stop offset="0.750" stop-color="#ffedd3"/><stop offset="0.875" stop-color="#ffdac2"/><stop offset="1.000" stop-color="#ffcab3"/></linearGradient><linearGradient id="c12"><stop offset="0.000" stop-color="#99ffe8"/><stop offset="0.125" stop-color="#acffe8"/><stop offset="0.250" stop-color="#c0ffe7"/><stop offset="0.375" stop-color="#d4ffe7"/><stop offset="0.500" stop-color="#e9ffe7"/><stop offset="0.625" stop-color="#ffffe6"/><stop offset="0.750" stop-color="#ffead3"/><stop offset="0.875" stop-color="#ffd8c2"/><stop offset="1.000" stop-color="#ffc8b3"/></linearGradient><linearGradient id="c13"><stop offset="0.000" stop-color="#9bffea"/><stop offset="0.125" stop-color="#aeffea"/><stop offset="0.250" stop-color="#c2ffea"/><stop offset="0.375" stop-color="#d6ffe9"/><stop offset="0.500" stop-color="#ebffe9"/><stop offset="0.625" stop-color="#fffde7"/><stop offset="0.750" stop-color="#ffe8d3"/><stop offset="0.875" stop-color="#ffd6c3"/><stop offset="1.000" stop-color="#ffc6b4"/></linearGradient><linearGradient id="c14"><stop offset="0.000" stop-color="#9dffed"/><stop offset="0.125" stop-color="#b0ffec"/><stop offset="0.250" stop-color="#c4ffec"/><stop offset="0.375" stop-color="#d8ffec"/><stop offset="0.500" stop-color="#eeffeb"/><stop offset="0.625" stop-color="#fffae7"/><stop offset="0.750" stop-color="#ffe6d4"/><stop offset="0.875" stop-color="#ffd4c3"/><stop offset="1.000" stop-color="#ffc4b4"/></linearGradient><linearGradient id="c15"><stop offset="0.000" stop-color="#9effef"/><stop offset="0.125" stop-color="#b2ffef"/><stop offset="0.250" stop-color="#c6ffef"/><stop offset="0.375" stop-color="#dbffee"/><stop offset="0.500" stop-color="#f0ffee"/><stop offset="0.625" stop-color="#fff8e7"/><stop offset="0.750" stop-color="#ffe4d4"/><stop offset="0.875" stop-color="#ffd2c3"/><stop offset="1.000" stop-color="#ffc2b4"/></linearGradient><linearGradient id="c16"><stop offset="0.000" stop-color="#a0fff1"/><stop offset="0.125" stop-color="#b4fff1"/><stop offset="0.250" stop-color="#c8fff1"/><stop offset="0.375" stop-color="#ddfff1"/><stop offset="0.500" stop-color="#f2fff1"/><stop offset="0.625" stop-color="#fff5e7"/><stop offset="0.750" stop-color="#ffe2d4"/><stop offset="0.875" stop-color="#ffd0c4"/><stop offset="1.000" stop-color="#ffc0b5"/></linearGradient><linearGradient id="c17"><stop offset="0.000" stop-color="#a2fff4"/><stop offset="0.125" stop-color="#b6fff4"/><stop offset="0.250" stop-color="#cafff3"/><stop offset="0.375" stop-color="#dffff3"/><stop offset="0.500" stop-color="#f5fff3"/><stop offset="0.625" stop-color="#fff3e8"/><stop offset="0.750" stop-color="#ffdfd5"/><stop offset="0.875" stop-color="#ffcec4"/><stop offset="1.000" stop-color="#ffbfb5"/></linearGradient><linearGradient id="c18"><stop offset="0.000" stop-color="#a4fff6"/><stop offset="0.125" stop-color="#b8fff6"/><stop offset="0.250" stop-color="#ccfff6"/><stop offset="0.375" stop-color="#e1fff6"/><stop offset="0.500" stop-color="#f7fff6"/><stop offset="0.625" stop-color="#fff1e8"/><stop offset="0.750" stop-color="#ffddd5"/><stop offset="0.875" stop-color="#ffccc4"/><stop offset="1.000" stop-color="#ffbdb6"/></linearGradient><linearGradient id="c19"><stop offset="0.000" stop-color="#a6fff9"/><stop offset="0.125" stop-color="#b9fff9"/><stop offset="0.250" stop-color="#cefff9"/><stop offset="0.375" stop-color="#e3fff8"/><stop offset="0.500" stop-color="#fafff8"/><stop offset="0.625" stop-color="#ffeee8"/><stop offset="0.750" stop-color="#ffdbd5"/><stop offset="0.875" stop-color="#ffcac5"/><stop offset="1.000" stop-color="#ffbbb6"/></linearGradient><linearGradient id="c20"><stop offset="0.000" stop-color="#a7fffb"/><stop offset="0.125" stop-color="#bbfffb"/><stop offset="0.250" stop-color="#d0fffb"/><stop offset="0.375" stop-color="#e6fffb"/><stop offset="0.500" stop-color="#fcfffb"/><stop offset="0.625" stop-color="#ffece8"/><stop offset="0.750" stop-color="#ffd9d6"/><stop offset="0.875" stop-color="#ffc8c5"/><stop offset="1.000" stop-color="#ffb9b6"/></linearGradient><linearGradient id="c21"><stop offset="0.000" stop-color="#a9fffe"/><stop offset="0.125" stop-color="#bdfffe"/><stop offset="0.250" stop-color="#d2fffe"/><stop offset="0.375" stop-color="#e8fffe"/><stop offset="0.500" stop-color="#fffffe"/><stop offset="0.625" stop-color="#ffeae9"/><stop offset="0.750" stop-color="#ffd7d6"/><stop offset="0.875" stop-color="#ffc6c5"/><stop offset="1.000" stop-color="#ffb7b7"/></linearGradient><linearGradient id="c22"><stop offset="0.000" stop-color="#aafeff"/><stop offset="0.125" stop-color="#befeff"/><stop offset="0.250" stop-color="#d3feff"/><stop offset="0.375" stop-color="#e9feff"/><stop offset="0.500" stop-color="#fffdfe"/><stop offset="0.625" stop-color="#ffe7e9"/><stop offset="0.750" stop-color="#ffd5d6"/><stop offset="0.875" stop-color="#ffc4c6"/><stop offset="1.000" stop-color="#ffb6b7"/></linearGradient><linearGradient id="c23"><stop offset="0.000" stop-color="#aafbff"/><stop offset="0.125" stop-color="#bffbff"/><stop offset="0.250" stop-color="#d3fbff"/><stop offset="0.375" stop-color="#e9fbff"/><stop offset="0.500" stop-color="#fffafe"/><stop offset="0.625" stop-color="#ffe5e9"/><stop offset="0.750" stop-color="#ffd3d6"/><stop offset="0.875" stop-color="#ffc2c6"/><stop offset="1.000" stop-color="#ffb4b7"/></linearGradient><linearGradient id="c24"><stop offset="0.000" stop-color="#abf9ff"/><stop offset="0.125" stop-color="#bff9ff"/><stop offset="0.250" stop-color="#d3f8ff"/><stop offset="0.375" stop-color="#e9f8ff"/><stop offset="0.500" stop-color="#fff8ff"/><stop offset="0.625" stop-color="#ffe3e9"/><stop offset="0.750" stop-color="#ffd1d7"/><stop offset="0.875" stop-color="#ffc1c6"/><stop offset="1.000" stop-color="#ffb2b8"/></linearGradient><linearGradient id="c25"><stop offset="0.000" stop-color="#abf6ff"/><stop offset="0.125" stop-color="#bff6ff"/><stop offset="0.250" stop-color="#d3f6ff"/><stop offset="0.375" stop-color="#e9f6ff"/><stop offset="0.500" stop-color="#fff5ff"/><stop offset="0.625" stop-color="#ffe1ea"/><stop offset="0.750" stop-color="#ffcfd7"/><stop offset="0.875" stop-color="#ffbfc7"/><stop offset="1.000" stop-color="#ffb0b8"/></linearGradient><linearGradient id="c26"><stop offset="0.000" stop-color="#abf4ff"/><stop offset="0.125" stop-color="#bff4ff"/><stop offset="0.250" stop-color="#d3f3ff"/><stop offset="0.375" stop-color="#e9f3ff"/><stop offset="0.500" stop-color="#fff3ff"/><stop offset="0.625" stop-color="#ffdeea"/><stop offset="0.750" stop-color="#ffcdd7"/><stop offset="0.875" stop-color="#ffbdc7"/><stop offset="1.000" stop-color="#ffafb8"/></linearGradient><linearGradient id="c27"><stop offset="0.000" stop-color="#abf1ff"/><stop offset="0.125" stop-color="#bff1ff"/><stop offset="0.250" stop-color="#d3f1ff"/><stop offset="0.375" stop-color="#e9f0ff"/><stop offset="0.500" stop-color="#fff0ff"/><stop offset="0.625" stop-color="#ffdcea"/><stop offset="0.750" stop-color="#ffcbd8"/><stop offset="0.875" stop-color="#ffbbc7"/><stop offset="1.000" stop-color="#ffadb9"/></linearGradient><linearGradient id="c28"><stop offset="0.000" stop-color="#abefff"/><stop offset="0.125" stop-color="#bfefff"/><stop offset="0.250" stop-color="#d3eeff"/><stop offset="0.375" stop-color="#e9eeff"/><stop offset="0.500" stop-color="#ffeeff"/><stop offset="0.625" stop-color="#ffdaea"/><stop offset="0.750" stop-color="#ffc9d8"/><stop offset="0.875" stop-color="#ffb9c8"/><stop offset="1.000" stop-color="#ffabb9"/></linearGradient><linearGradient id="c29"><stop offset="0.000" stop-color="#abedff"/><stop offset="0.125" stop-color="#bfecff"/><stop offset="0.250" stop-color="#d3ecff"/><stop offset="0.375" stop-color="#e9ebff"/><stop offset="0.500" stop-color="#feebff"/><stop offset="0.625" stop-color="#ffd8eb"/><stop offset="0.750" stop-color="#ffc7d8"/><stop offset="0.875" stop-color="#ffb7c8"/><stop offset="1.000" stop-color="#ffaab9"/></linearGradient><linearGradient id="c30"><stop offset="0.000" stop-color="#abeaff"/><stop offset="0.125" stop-color="#bfeaff"/><stop offset="0.250" stop-color="#d3e9ff"/><stop offset="0.375" stop-color="#e8e9ff"/><stop offset="0.500" stop-color="#fee8ff"/><stop offset="0.625" stop-color="#ffd6eb"/><stop offset="0.750" stop-color="#ffc5d9"/><stop offset="0.875" stop-color="#ffb5c8"/><stop offset="1.000" stop-color="#ffa8ba"/></linearGradient><linearGradient id="c31"><stop offset="0.000" stop-color="#ace8ff"/><stop offset="0.125" stop-color="#bfe7ff"/><stop offset="0.250" stop-color="#d3e7ff"/><stop offset="0.375" stop-color="#e8e6ff"/><stop offset="0.500" stop-color="#fee6ff"/><stop offset="0.625" stop-color="#ffd4eb"/><stop offset="0.750" stop-color="#ffc3d9"/><stop offset="0.875" stop-color="#ffb4c9"/><stop offset="1.000" stop-color="#ffa6ba"/></linearGradient><linearGradient id="c32"><stop offset="0.000" stop-color="#ace5ff"/><stop offset="0.125" stop-color="#bfe5ff"/><stop offset="0.250" stop-color="#d3e4ff"/><stop offset="0.375" stop-color="#e8e4ff"/><stop offset="0.500" stop-color="#fee3ff"/><stop offset="0.625" stop-color="#ffd1eb"/><stop offset="0.750" stop-color="#ffc1d9"/><stop offset="0.875" stop-color="#ffb2c9"/><stop offset="1.000" stop-color="#ffa5ba"/></linearGradient><linearGradient id="c33"><stop offset="0.000" stop-color="#ace3ff"/><stop offset="0.125" stop-color="#bfe3ff"/><stop offset="0.250" stop-color="#d3e2ff"/><stop offset="0.375" stop-color="#e8e1ff"/><stop offset="0.500" stop-color="#fee1ff"/><stop offset="0.625" stop-color="#ffcfec"/><stop offset="0.750" stop-color="#ffbfd9"/><stop offset="0.875" stop-color="#ffb0c9"/><stop offset="1.000" stop-color="#ffa3bb"/></linearGradient><linearGradient id="c34"><stop offset="0.000" stop-color="#ace1ff"/><stop offset="0.125" stop-color="#bfe0ff"/><stop offset="0.250" stop-color="#d3e0ff"/><stop offset="0.375" stop-color="#e8dfff"/><stop offset="0.500" stop-color="#fddeff"/><stop offset="0.625" stop-color="#ffcdec"/><stop offset="0.750" stop-color="#ffbdda"/><stop offset="0.875" stop-color="#ffaeca"/><stop offset="1.000" stop-color="#ffa1bb"/></linearGradient><linearGradient id="c35"><stop offset="0.000" stop-color="#acdeff"/><stop offset="0.125" stop-color="#bfdeff"/><stop offset="0.250" stop-color="#d3ddff"/><stop offset="0.375" stop-color="#e8ddff"/><stop offset="0.500" stop-color="#fddcff"/><stop offset="0.625" stop-color="#ffcbec"/><stop offset="0.750" stop-color="#ffbbda"/><stop offset="0.875" stop-color="#ffacca"/><stop offset="1.000" stop-color="#ffa0bb"/></linearGradient><linearGradient id="c36"><stop offset="0.000" stop-color="#acdcff"/><stop offset="0.125" stop-color="#c0dcff"/><stop offset="0.250" stop-color="#d3dbff"/><stop offset="0.375" stop-color="#e8daff"/><stop offset="0.500" stop-color="#fddaff"/><stop offset="0.625" stop-color="#ffc9ec"/><stop offset="0.750" stop-color="#ffb9da"/><stop offset="0.875" stop-color="#ffabca"/><stop offset="1.000" stop-color="#ff9ebc"/></linearGradient><linearGradient id="c37"><stop offset="0.000" stop-color="#addaff"/><stop offset="0.125" stop-color="#c0d9ff"/><stop offset="0.250" stop-color="#d3d9ff"/><stop offset="0.375" stop-color="#e8d8ff"/><stop offset="0.500" stop-color="#fdd7ff"/><stop offset="0.625" stop-color="#ffc7ed"/><stop offset="0.750" stop-color="#ffb7da"/><stop offset="0.875" stop-color="#ffa9ca"/><stop offset="1.000" stop-color="#ff9cbc"/></linearGradient><linearGradient id="c38"><stop offset="0.000" stop-color="#add8ff"/><stop offset="0.125" stop-color="#c0d7ff"/><stop offset="0.250" stop-color="#d3d6ff"/><stop offset="0.375" stop-color="#e8d5ff"/><stop offset="0.500" stop-color="#fdd5ff"/><stop offset="0.625" stop-color="#ffc5ed"/><stop offset="0.750" stop-color="#ffb5db"/><stop offset="0.875" stop-color="#ffa7cb"/><stop offset="1.000" stop-color="#ff9bbc"/></linearGradient><linearGradient id="c39"><stop offset="0.000" stop-color="#add5ff"/><stop offset="0.125" stop-color="#c0d5ff"/><stop offset="0.250" stop-color="#d3d4ff"/><stop offset="0.375" stop-color="#e8d3ff"/><stop offset="0.500" stop-color="#fdd2ff"/><stop offset="0.625" stop-color="#ffc3ed"/><stop offset="0.750" stop-color="#ffb3db"/><stop offset="0.875" stop-color="#ffa5cb"/><stop offset="1.000" stop-color="#ff99bd"/></linearGradient><linearGradient id="c40"><stop offset="0.000" stop-color="#add3ff"/><stop offset="0.125" stop-color="#c0d2ff"/><stop offset="0.250" stop-color="#d3d2ff"/><stop offset="0.375" stop-color="#e8d1ff"/><stop offset="0.500" stop-color="#fcd0ff"/><stop offset="0.625" stop-color="#ffc1ed"/><stop offset="0.750" stop-color="#ffb1db"/><stop offset="0.875" stop-color="#ffa4cb"/><stop offset="1.000" stop-color="#ff97bd"/></linearGradient><linearGradient id="c41"><stop offset="0.000" stop-color="#add1ff"/><stop offset="0.125" stop-color="#c0d0ff"/><stop offset="0.250" stop-color="#d3cfff"/><stop offset="0.375" stop-color="#e7cfff"/><stop offset="0.500" stop-color="#fcceff"/><stop offset="0.625" stop-color="#ffbfed"/><stop offset="0.750" stop-color="#ffafdc"/><stop offset="0.875" stop-color="#ffa2cc"/><stop offset="1.000" stop-color="#ff96bd"/></linearGradient><linearGradient id="c42"><stop offset="0.000" stop-color="#adcfff"/><stop offset="0.125" stop-color="#c0ceff"/><stop offset="0.250" stop-color="#d3cdff"/><stop offset="0.375" stop-color="#e7ccff"/><stop offset="0.500" stop-color="#fccbff"/><stop offset="0.625" stop-color="#ffbdee"/><stop offset="0.750" stop-color="#ffaedc"/><stop offset="0.875" stop-color="#ffa0cc"/><stop offset="1.000" stop-color="#ff94be"/></linearGradient><linearGradient id="c43"><stop offset="0.000" stop-color="#adcdff"/><stop offset="0.125" stop-color="#c0ccff"/><stop offset="0.250" stop-color="#d3cbff"/><stop offset="0.375" stop-color="#e7caff"/><stop offset="0.500" stop-color="#fcc9ff"/><stop offset="0.625" stop-color="#ffbbee"/><stop offset="0.750" stop-color="#ffacdc"/><stop offset="0.875" stop-color="#ff9fcc"/><stop offset="1.000" stop-color="#ff93be"/></linearGradient></defs><rect x="570.0" y="1142.80" width="366.3" height="6.61" fill="url(#c0)"/><rect x="570.0" y="1148.81" width="366.3" height="6.61" fill="url(#c1)"/><rect x="570.0" y="1154.82" width="366.3" height="6.61" fill="url(#c2)"/><rect x="570.0" y="1160.83" width="366.3" height="6.61" fill="url(#c3)"/><rect x="570.0" y="1166.84" width="366.3" height="6.61" fill="url(#c4)"/><rect x="570.0" y="1172.85" width="366.3" height="6.61" fill="url(#c5)"/><rect x="570.0" y="1178.85" width="366.3" height="6.61" fill="url(#c6)"/><rect x="570.0" y="1184.86" width="366.3" height="6.61" fill="url(#c7)"/><rect x="570.0" y="1190.87" width="366.3" height="6.61" fill="url(#c8)"/><rect x="570.0" y="1196.88" width="366.3" height="6.61" fill="url(#c9)"/><rect x="570.0" y="1202.89" width="366.3" height="6.61" fill="url(#c10)"/><rect x="570.0" y="1208.90" width="366.3" height="6.61" fill="url(#c11)"/><rect x="570.0" y="1214.91" width="366.3" height="6.61" fill="url(#c12)"/><rect x="570.0" y="1220.92" width="366.3" height="6.61" fill="url(#c13)"/><rect x="570.0" y="1226.93" width="366.3" height="6.61" fill="url(#c14)"/><rect x="570.0" y="1232.94" width="366.3" height="6.61" fill="url(#c15)"/><rect x="570.0" y="1238.95" width="366.3" height="6.61" fill="url(#c16)"/><rect x="570.0" y="1244.95" width="366.3" height="6.61" fill="url(#c17)"/><rect x="570.0" y="1250.96" width="366.3" height="6.61" fill="url(#c18)"/><rect x="570.0" y="1256.97" width="366.3" height="6.61" fill="url(#c19)"/><rect x="570.0" y="1262.98" width="366.3" height="6.61" fill="url(#c20)"/><rect x="570.0" y="1268.99" width="366.3" height="6.61" fill="url(#c21)"/><rect x="570.0" y="1275.00" width="366.3" height="6.61" fill="url(#c22)"/><rect x="570.0" y="1281.01" width="366.3" height="6.61" fill="url(#c23)"/><rect x="570.0" y="1287.02" width="366.3" height="6.61" fill="url(#c24)"/><rect x="570.0" y="1293.03" width="366.3" height="6.61" fill="url(#c25)"/><rect x="570.0" y="1299.04" width="366.3" height="6.61" fill="url(#c26)"/><rect x="570.0" y="1305.05" width="366.3" height="6.61" fill="url(#c27)"/><rect x="570.0" y="1311.05" width="366.3" height="6.61" fill="url(#c28)"/><rect x="570.0" y="1317.06" width="366.3" height="6.61" fill="url(#c29)"/><rect x="570.0" y="1323.07" width="366.3" height="6.61" fill="url(#c30)"/><rect x="570.0" y="1329.08" width="366.3" height="6.61" fill="url(#c31)"/><rect x="570.0" y="1335.09" width="366.3" height="6.61" fill="url(#c32)"/><rect x="570.0" y="1341.10" width="366.3" height="6.61" fill="url(#c33)"/><rect x="570.0" y="1347.11" width="366.3" height="6.61" fill="url(#c34)"/><rect x="570.0" y="1353.12" width="366.3" height="6.61" fill="url(#c35)"/><rect x="570.0" y="1359.13" width="366.3" height="6.61" fill="url(#c36)"/><rect x="570.0" y="1365.14" width="366.3" height="6.61" fill="url(#c37)"/><rect x="570.0" y="1371.15" width="366.3" height="6.61" fill="url(#c38)"/><rect x="570.0" y="1377.15" width="366.3" height="6.61" fill="url(#c39)"/><rect x="570.0" y="1383.16" width="366.3" height="6.61" fill="url(#c40)"/><rect x="570.0" y="1389.17" width="366.3" height="6.61" fill="url(#c41)"/><rect x="570.0" y="1395.18" width="366.3" height="6.61" fill="url(#c42)"/><rect x="570.0" y="1401.19" width="366.3" height="6.61" fill="url(#c43)"/></svg>
<svg style="left:500px;top:1125px" width="460" height="340" viewBox="500 1125 460 340"><rect x="570.0" y="1142.8" width="366.3" height="264.4" fill="none" stroke="#8a8a8a" stroke-width="2"/><clipPath id="cp"><rect x="570.0" y="1142.8" width="366.3" height="264.4"/></clipPath><path clip-path="url(#cp)" d="M612,1411.5 Q776,1282.5 940,1182.7" fill="none" stroke="#000" stroke-width="4"/><g stroke="#d0d0d0" stroke-width="1.8"><path d="M562.3,1164.2 H569.5"/><path d="M585.5,1408 V1416.5"/><path d="M562.3,1216.8 H569.5"/><path d="M658.5,1408 V1416.5"/><path d="M562.3,1269.5 H569.5"/><path d="M731.6,1408 V1416.5"/><path d="M562.3,1322.1 H569.5"/><path d="M804.6,1408 V1416.5"/><path d="M562.3,1374.7 H569.5"/><path d="M877.7,1408 V1416.5"/></g><rect x="742" y="1264.2" width="21" height="21.4" fill="none" stroke="#000" stroke-width="2.2"/><circle cx="725.1" cy="1287.5" r="6.4" fill="#15191a" stroke="#000" stroke-width="1.5"/><circle cx="732.9" cy="1285.8" r="6.4" fill="#2a2c2e" stroke="#000" stroke-width="1.5"/><circle cx="748.6" cy="1271.6" r="6.4" fill="#454545" stroke="#000" stroke-width="1.5"/><circle cx="749.4" cy="1273" r="6.4" fill="#555" stroke="#000" stroke-width="1.5"/><circle cx="750.6" cy="1275.4" r="6.4" fill="#6a6a6a" stroke="#000" stroke-width="1.5"/><circle cx="751.4" cy="1276.6" r="6.4" fill="#808080" stroke="#000" stroke-width="1.5"/><circle cx="752.5" cy="1272.4" r="6.4" fill="#adadad" stroke="#000" stroke-width="1.5"/><circle cx="742.6" cy="1279.3" r="6.4" fill="#c8c8c8" stroke="#000" stroke-width="1.5"/><circle cx="741.2" cy="1277.5" r="6.4" fill="#e2e2e2" stroke="#000" stroke-width="1.5"/><circle cx="740.2" cy="1283.4" r="6.4" fill="#ffffff" stroke="#000" stroke-width="1.5"/></svg>
<span class="t" style="left:519.54px;top:1155px;font-size:21.5px;color:#d6d6d6;">0,35</span>
<span class="t" style="left:519.28px;top:1207px;font-size:21.5px;color:#d6d6d6;">0,34</span>
<span class="t" style="left:519.59px;top:1260px;font-size:21.5px;color:#d6d6d6;">0,33</span>
<span class="t" style="left:519.74px;top:1313px;font-size:21.5px;color:#d6d6d6;">0,32</span>
<span class="t" style="left:519.69px;top:1365px;font-size:21.5px;color:#d6d6d6;">0,31</span>
<span class="t" style="left:564.17px;top:1424px;font-size:21.5px;color:#d6d6d6;">0,29</span>
<span class="t" style="left:643.15px;top:1424px;font-size:21.5px;color:#d6d6d6;">0,3</span>
<span class="t" style="left:710.28px;top:1424px;font-size:21.5px;color:#d6d6d6;">0,31</span>
<span class="t" style="left:783.35px;top:1424px;font-size:21.5px;color:#d6d6d6;">0,32</span>
<span class="t" style="left:856.32px;top:1424px;font-size:21.5px;color:#d6d6d6;">0,33</span>
<div style="left:961.5px;top:1106.5px;width:1340.5px;height:323.7px;background:#161616;"></div>
<div style="left:963px;top:1108.5px;width:1337.5px;height:43px;background:linear-gradient(#2c2c2c 0,#343434 52%,#131313 53%,#1b1b1b 100%);"></div>
<span class="t" style="left:1247.03px;top:1122px;font-size:21.5px;color:#f0f0f0;transform:scaleX(1.0800);">0</span>
<span class="t" style="left:1346.15px;top:1122px;font-size:21.5px;color:#f0f0f0;transform:scaleX(1.0800);">10</span>
<span class="t" style="left:1445.45px;top:1122px;font-size:21.5px;color:#f0f0f0;transform:scaleX(1.0800);">20</span>
<span class="t" style="left:1544.59px;top:1122px;font-size:21.5px;color:#f0f0f0;transform:scaleX(1.0800);">30</span>
<span class="t" style="left:1643.78px;top:1122px;font-size:21.5px;color:#f0f0f0;transform:scaleX(1.0800);">40</span>
<span class="t" style="left:1742.57px;top:1122px;font-size:21.5px;color:#f0f0f0;transform:scaleX(1.0800);">50</span>
<span class="t" style="left:1841.45px;top:1122px;font-size:21.5px;color:#f0f0f0;transform:scaleX(1.0800);">60</span>
<span class="t" style="left:1940.44px;top:1122px;font-size:21.5px;color:#f0f0f0;transform:scaleX(1.0800);">70</span>
<span class="t" style="left:2039.53px;top:1122px;font-size:21.5px;color:#f0f0f0;transform:scaleX(1.0800);">80</span>
<span class="t" style="left:2138.50px;top:1122px;font-size:21.5px;color:#f0f0f0;transform:scaleX(1.0800);">90</span>
<span class="t" style="left:2230.69px;top:1122px;font-size:21.5px;color:#f0f0f0;transform:scaleX(1.0800);">100</span>
<div style="left:963px;top:1151.6px;width:1337.5px;height:39.6143px;background:linear-gradient(#4b4b4b,#3b3b3b);"></div>
<span class="t" style="left:982.96px;top:1161px;font-size:25.9px;color:#f2f2f2;transform:scaleX(0.8910);font-weight:700;">x: CIE31</span>
<span class="t" style="left:1203.25px;top:1160px;font-size:26.4px;color:#ededed;transform:scaleX(0.9213);-webkit-text-stroke:0.25px #eee;">0,26</span>
<span class="t" style="left:1316.25px;top:1160px;font-size:26.4px;color:#ededed;transform:scaleX(0.9213);-webkit-text-stroke:0.25px #eee;">0,31</span>
<span class="t" style="left:1415.25px;top:1160px;font-size:26.4px;color:#ededed;transform:scaleX(0.9213);-webkit-text-stroke:0.25px #eee;">0,31</span>
<span class="t" style="left:1514.25px;top:1160px;font-size:26.4px;color:#ededed;transform:scaleX(0.9213);-webkit-text-stroke:0.25px #eee;">0,31</span>
<span class="t" style="left:1613.25px;top:1160px;font-size:26.4px;color:#ededed;transform:scaleX(0.9213);-webkit-text-stroke:0.25px #eee;">0,31</span>
<span class="t" style="left:1712.25px;top:1160px;font-size:26.4px;color:#ededed;transform:scaleX(0.9213);-webkit-text-stroke:0.25px #eee;">0,31</span>
<span class="t" style="left:1811.25px;top:1160px;font-size:26.4px;color:#ededed;transform:scaleX(0.9213);-webkit-text-stroke:0.25px #eee;">0,31</span>
<span class="t" style="left:1910.25px;top:1160px;font-size:26.4px;color:#ededed;transform:scaleX(0.9213);-webkit-text-stroke:0.25px #eee;">0,31</span>
<span class="t" style="left:2009.25px;top:1160px;font-size:26.4px;color:#ededed;transform:scaleX(0.9213);-webkit-text-stroke:0.25px #eee;">0,31</span>
<span class="t" style="left:2108.25px;top:1160px;font-size:26.4px;color:#ededed;transform:scaleX(0.9213);-webkit-text-stroke:0.25px #eee;">0,31</span>
<span class="t" style="left:2207.25px;top:1160px;font-size:26.4px;color:#ededed;transform:scaleX(0.9213);-webkit-text-stroke:0.25px #eee;">0,31</span>
<div style="left:963px;top:1191.21px;width:1337.5px;height:39.6143px;background:linear-gradient(#888,#767676);"></div>
<span class="t" style="left:982.94px;top:1200px;font-size:25.9px;color:#f2f2f2;transform:scaleX(0.8912);font-weight:700;">y: CIE31</span>
<span class="t" style="left:1203.25px;top:1199px;font-size:26.4px;color:#f0f0f0;transform:scaleX(0.9213);-webkit-text-stroke:0.25px #eee;">0,23</span>
<span class="t" style="left:1316.25px;top:1199px;font-size:26.4px;color:#f0f0f0;transform:scaleX(0.9213);-webkit-text-stroke:0.25px #eee;">0,33</span>
<span class="t" style="left:1415.25px;top:1199px;font-size:26.4px;color:#f0f0f0;transform:scaleX(0.9213);-webkit-text-stroke:0.25px #eee;">0,33</span>
<span class="t" style="left:1514.25px;top:1199px;font-size:26.4px;color:#f0f0f0;transform:scaleX(0.9213);-webkit-text-stroke:0.25px #eee;">0,33</span>
<span class="t" style="left:1613.25px;top:1199px;font-size:26.4px;color:#f0f0f0;transform:scaleX(0.9213);-webkit-text-stroke:0.25px #eee;">0,33</span>
<span class="t" style="left:1712.25px;top:1199px;font-size:26.4px;color:#f0f0f0;transform:scaleX(0.9213);-webkit-text-stroke:0.25px #eee;">0,33</span>
<span class="t" style="left:1811.25px;top:1199px;font-size:26.4px;color:#f0f0f0;transform:scaleX(0.9213);-webkit-text-stroke:0.25px #eee;">0,33</span>
<span class="t" style="left:1910.25px;top:1199px;font-size:26.4px;color:#f0f0f0;transform:scaleX(0.9213);-webkit-text-stroke:0.25px #eee;">0,33</span>
<span class="t" style="left:2009.25px;top:1199px;font-size:26.4px;color:#f0f0f0;transform:scaleX(0.9213);-webkit-text-stroke:0.25px #eee;">0,33</span>
<span class="t" style="left:2108.25px;top:1199px;font-size:26.4px;color:#f0f0f0;transform:scaleX(0.9213);-webkit-text-stroke:0.25px #eee;">0,33</span>
<span class="t" style="left:2207.25px;top:1199px;font-size:26.4px;color:#f0f0f0;transform:scaleX(0.9213);-webkit-text-stroke:0.25px #eee;">0,33</span>
<div style="left:963px;top:1230.83px;width:1337.5px;height:39.6143px;background:linear-gradient(#4b4b4b,#3b3b3b);"></div>
<span class="t" style="left:982.71px;top:1240px;font-size:25.9px;color:#f2f2f2;transform:scaleX(0.8910);font-weight:700;">Y</span>
<span class="t" style="left:1203.25px;top:1239px;font-size:26.4px;color:#ededed;transform:scaleX(0.9213);-webkit-text-stroke:0.25px #eee;">0,22</span>
<span class="t" style="left:1315.98px;top:1239px;font-size:26.4px;color:#ededed;transform:scaleX(0.9213);-webkit-text-stroke:0.25px #eee;">2,33</span>
<span class="t" style="left:1415.08px;top:1239px;font-size:26.4px;color:#ededed;transform:scaleX(0.9213);-webkit-text-stroke:0.25px #eee;">9,43</span>
<span class="t" style="left:1513.98px;top:1239px;font-size:26.4px;color:#ededed;transform:scaleX(0.9213);-webkit-text-stroke:0.25px #eee;">22,30</span>
<span class="t" style="left:1613.66px;top:1239px;font-size:26.4px;color:#ededed;transform:scaleX(0.9213);-webkit-text-stroke:0.25px #eee;">42,22</span>
<span class="t" style="left:1711.98px;top:1239px;font-size:26.4px;color:#ededed;transform:scaleX(0.9213);-webkit-text-stroke:0.25px #eee;">69,71</span>
<span class="t" style="left:1810.35px;top:1239px;font-size:26.4px;color:#ededed;transform:scaleX(0.9213);-webkit-text-stroke:0.25px #eee;">103,67</span>
<span class="t" style="left:1909.35px;top:1239px;font-size:26.4px;color:#ededed;transform:scaleX(0.9213);-webkit-text-stroke:0.25px #eee;">144,31</span>
<span class="t" style="left:2008.35px;top:1239px;font-size:26.4px;color:#ededed;transform:scaleX(0.9213);-webkit-text-stroke:0.25px #eee;">194,82</span>
<span class="t" style="left:2107.98px;top:1239px;font-size:26.4px;color:#ededed;transform:scaleX(0.9213);-webkit-text-stroke:0.25px #eee;">253,21</span>
<span class="t" style="left:2207.28px;top:1239px;font-size:26.4px;color:#ededed;transform:scaleX(0.9213);-webkit-text-stroke:0.25px #eee;">318,13</span>
<div style="left:963px;top:1270.44px;width:1337.5px;height:39.6143px;background:linear-gradient(#888,#767676);"></div>
<span class="t" style="left:982.82px;top:1279px;font-size:25.9px;color:#f2f2f2;transform:scaleX(0.9687);font-weight:700;">Target Y</span>
<span class="t" style="left:1203.25px;top:1278px;font-size:26.4px;color:#f0f0f0;transform:scaleX(0.9213);-webkit-text-stroke:0.25px #eee;">0,00</span>
<span class="t" style="left:1316.28px;top:1278px;font-size:26.4px;color:#f0f0f0;transform:scaleX(0.9213);-webkit-text-stroke:0.25px #eee;">3,29</span>
<span class="t" style="left:1414.35px;top:1278px;font-size:26.4px;color:#f0f0f0;transform:scaleX(0.9213);-webkit-text-stroke:0.25px #eee;">10,53</span>
<span class="t" style="left:1513.98px;top:1278px;font-size:26.4px;color:#f0f0f0;transform:scaleX(0.9213);-webkit-text-stroke:0.25px #eee;">22,99</span>
<span class="t" style="left:1613.66px;top:1278px;font-size:26.4px;color:#f0f0f0;transform:scaleX(0.9213);-webkit-text-stroke:0.25px #eee;">42,27</span>
<span class="t" style="left:1711.98px;top:1278px;font-size:26.4px;color:#f0f0f0;transform:scaleX(0.9213);-webkit-text-stroke:0.25px #eee;">68,67</span>
<span class="t" style="left:1810.35px;top:1278px;font-size:26.4px;color:#f0f0f0;transform:scaleX(0.9213);-webkit-text-stroke:0.25px #eee;">101,34</span>
<span class="t" style="left:1909.35px;top:1278px;font-size:26.4px;color:#f0f0f0;transform:scaleX(0.9213);-webkit-text-stroke:0.25px #eee;">141,63</span>
<span class="t" style="left:2008.35px;top:1278px;font-size:26.4px;color:#f0f0f0;transform:scaleX(0.9213);-webkit-text-stroke:0.25px #eee;">192,09</span>
<span class="t" style="left:2107.98px;top:1278px;font-size:26.4px;color:#f0f0f0;transform:scaleX(0.9213);-webkit-text-stroke:0.25px #eee;">251,73</span>
<span class="t" style="left:2207.28px;top:1278px;font-size:26.4px;color:#f0f0f0;transform:scaleX(0.9213);-webkit-text-stroke:0.25px #eee;">318,13</span>
<div style="left:963px;top:1310.06px;width:1337.5px;height:39.6143px;background:linear-gradient(#4b4b4b,#3b3b3b);"></div>
<span class="t" style="left:982.07px;top:1318px;font-size:25.9px;color:#f2f2f2;transform:scaleX(0.9666);font-weight:700;">Gamma Log/Log</span>
<span class="t" style="left:1202.35px;top:1317px;font-size:26.4px;color:#ededed;transform:scaleX(0.9213);-webkit-text-stroke:0.25px #eee;">1,28</span>
<span class="t" style="left:1315.98px;top:1317px;font-size:26.4px;color:#ededed;transform:scaleX(0.9213);-webkit-text-stroke:0.25px #eee;">2,15</span>
<span class="t" style="left:1414.98px;top:1317px;font-size:26.4px;color:#ededed;transform:scaleX(0.9213);-webkit-text-stroke:0.25px #eee;">2,19</span>
<span class="t" style="left:1513.98px;top:1317px;font-size:26.4px;color:#ededed;transform:scaleX(0.9213);-webkit-text-stroke:0.25px #eee;">2,20</span>
<span class="t" style="left:1612.98px;top:1317px;font-size:26.4px;color:#ededed;transform:scaleX(0.9213);-webkit-text-stroke:0.25px #eee;">2,20</span>
<span class="t" style="left:1711.98px;top:1317px;font-size:26.4px;color:#ededed;transform:scaleX(0.9213);-webkit-text-stroke:0.25px #eee;">2,20</span>
<span class="t" style="left:1810.98px;top:1317px;font-size:26.4px;color:#ededed;transform:scaleX(0.9213);-webkit-text-stroke:0.25px #eee;">2,19</span>
<span class="t" style="left:1909.98px;top:1317px;font-size:26.4px;color:#ededed;transform:scaleX(0.9213);-webkit-text-stroke:0.25px #eee;">2,20</span>
<span class="t" style="left:2008.98px;top:1317px;font-size:26.4px;color:#ededed;transform:scaleX(0.9213);-webkit-text-stroke:0.25px #eee;">2,20</span>
<span class="t" style="left:2107.98px;top:1317px;font-size:26.4px;color:#ededed;transform:scaleX(0.9213);-webkit-text-stroke:0.25px #eee;">2,21</span>
<span class="t" style="left:2206.98px;top:1317px;font-size:26.4px;color:#ededed;transform:scaleX(0.9213);-webkit-text-stroke:0.25px #eee;">2,27</span>
<div style="left:963px;top:1349.67px;width:1337.5px;height:39.6143px;background:linear-gradient(#888,#767676);"></div>
<span class="t" style="left:982.19px;top:1358px;font-size:25.9px;color:#f2f2f2;transform:scaleX(0.8593);font-weight:700;-webkit-text-stroke:0.55px #f2f2f2;">CCT</span>
<span class="t" style="left:1202.98px;top:1357px;font-size:26.4px;color:#f0f0f0;transform:scaleX(0.9213);-webkit-text-stroke:0.25px #eee;">28291,00</span>
<span class="t" style="left:1315.98px;top:1357px;font-size:26.4px;color:#f0f0f0;transform:scaleX(0.9213);-webkit-text-stroke:0.25px #eee;">6731,00</span>
<span class="t" style="left:1414.98px;top:1357px;font-size:26.4px;color:#f0f0f0;transform:scaleX(0.9213);-webkit-text-stroke:0.25px #eee;">6665,00</span>
<span class="t" style="left:1513.98px;top:1357px;font-size:26.4px;color:#f0f0f0;transform:scaleX(0.9213);-webkit-text-stroke:0.25px #eee;">6531,00</span>
<span class="t" style="left:1612.98px;top:1357px;font-size:26.4px;color:#f0f0f0;transform:scaleX(0.9213);-webkit-text-stroke:0.25px #eee;">6549,00</span>
<span class="t" style="left:1711.98px;top:1357px;font-size:26.4px;color:#f0f0f0;transform:scaleX(0.9213);-webkit-text-stroke:0.25px #eee;">6520,00</span>
<span class="t" style="left:1810.98px;top:1357px;font-size:26.4px;color:#f0f0f0;transform:scaleX(0.9213);-webkit-text-stroke:0.25px #eee;">6589,00</span>
<span class="t" style="left:1909.98px;top:1357px;font-size:26.4px;color:#f0f0f0;transform:scaleX(0.9213);-webkit-text-stroke:0.25px #eee;">6494,00</span>
<span class="t" style="left:2008.98px;top:1357px;font-size:26.4px;color:#f0f0f0;transform:scaleX(0.9213);-webkit-text-stroke:0.25px #eee;">6581,00</span>
<span class="t" style="left:2107.98px;top:1357px;font-size:26.4px;color:#f0f0f0;transform:scaleX(0.9213);-webkit-text-stroke:0.25px #eee;">6597,00</span>
<span class="t" style="left:2206.98px;top:1357px;font-size:26.4px;color:#f0f0f0;transform:scaleX(0.9213);-webkit-text-stroke:0.25px #eee;">6608,00</span>
<div style="left:963px;top:1389.29px;width:1337.5px;height:39.6143px;background:linear-gradient(#4b4b4b,#3b3b3b);"></div>
<span class="t" style="left:982.11px;top:1397px;font-size:25.9px;color:#f2f2f2;transform:scaleX(0.9592);font-weight:700;">ΔE 2000</span>
<span class="t" style="left:1202.35px;top:1396px;font-size:26.4px;color:#ededed;transform:scaleX(0.9213);-webkit-text-stroke:0.25px #eee;">1,33</span>
<span class="t" style="left:1315.35px;top:1396px;font-size:26.4px;color:#ededed;transform:scaleX(0.9213);-webkit-text-stroke:0.25px #eee;">1,67</span>
<span class="t" style="left:1414.35px;top:1396px;font-size:26.4px;color:#ededed;transform:scaleX(0.9213);-webkit-text-stroke:0.25px #eee;">1,03</span>
<span class="t" style="left:1514.25px;top:1396px;font-size:26.4px;color:#ededed;transform:scaleX(0.9213);-webkit-text-stroke:0.25px #eee;">0,59</span>
<span class="t" style="left:1613.25px;top:1396px;font-size:26.4px;color:#ededed;transform:scaleX(0.9213);-webkit-text-stroke:0.25px #eee;">0,30</span>
<span class="t" style="left:1712.25px;top:1396px;font-size:26.4px;color:#ededed;transform:scaleX(0.9213);-webkit-text-stroke:0.25px #eee;">0,38</span>
<span class="t" style="left:1811.25px;top:1396px;font-size:26.4px;color:#ededed;transform:scaleX(0.9213);-webkit-text-stroke:0.25px #eee;">0,76</span>
<span class="t" style="left:1910.25px;top:1396px;font-size:26.4px;color:#ededed;transform:scaleX(0.9213);-webkit-text-stroke:0.25px #eee;">0,46</span>
<span class="t" style="left:2009.25px;top:1396px;font-size:26.4px;color:#ededed;transform:scaleX(0.9213);-webkit-text-stroke:0.25px #eee;">0,68</span>
<span class="t" style="left:2108.25px;top:1396px;font-size:26.4px;color:#ededed;transform:scaleX(0.9213);-webkit-text-stroke:0.25px #eee;">0,75</span>
<span class="t" style="left:2207.25px;top:1396px;font-size:26.4px;color:#ededed;transform:scaleX(0.9213);-webkit-text-stroke:0.25px #eee;">0,94</span>
<div style="left:1.7px;top:1526.3px;width:181px;height:100px;background:linear-gradient(#a4a4a4 0%,#8a8a8a 30%,#6e6e6e 65%,#575757 100%);border-radius:7px;"></div>
<div style="left:9.7px;top:1534.2px;width:165px;height:59.2px;background:#000000;border-radius:6px;"></div>
<span class="t" style="left:87.26px;top:1605px;font-size:17.8px;color:#2b2b2b;font-weight:700;">0</span>
<div style="left:186px;top:1526.3px;width:181px;height:100px;background:linear-gradient(#a4a4a4 0%,#8a8a8a 30%,#6e6e6e 65%,#575757 100%);border-radius:7px;"></div>
<div style="left:194px;top:1534.2px;width:165px;height:59.2px;background:#1a1a1a;border-radius:6px;"></div>
<span class="t" style="left:266.41px;top:1605px;font-size:17.8px;color:#2b2b2b;font-weight:700;">10</span>
<div style="left:370.3px;top:1526.3px;width:181px;height:100px;background:linear-gradient(#a4a4a4 0%,#8a8a8a 30%,#6e6e6e 65%,#575757 100%);border-radius:7px;"></div>
<div style="left:378.3px;top:1534.2px;width:165px;height:59.2px;background:#333333;border-radius:6px;"></div>
<span class="t" style="left:450.96px;top:1605px;font-size:17.8px;color:#2b2b2b;font-weight:700;">20</span>
<div style="left:554.6px;top:1526.3px;width:181px;height:100px;background:linear-gradient(#a4a4a4 0%,#8a8a8a 30%,#6e6e6e 65%,#575757 100%);border-radius:7px;"></div>
<div style="left:562.6px;top:1534.2px;width:165px;height:59.2px;background:#4c4c4c;border-radius:6px;"></div>
<span class="t" style="left:635.36px;top:1605px;font-size:17.8px;color:#2b2b2b;font-weight:700;">30</span>
<div style="left:738.9px;top:1526.3px;width:181px;height:100px;background:linear-gradient(#a4a4a4 0%,#8a8a8a 30%,#6e6e6e 65%,#575757 100%);border-radius:7px;"></div>
<div style="left:746.9px;top:1534.2px;width:165px;height:59.2px;background:#666666;border-radius:6px;box-shadow:inset 0 2px 3px rgba(255,255,255,.16), inset 0 -1px 2px rgba(0,0,0,.15);"></div>
<span class="t" style="left:819.73px;top:1605px;font-size:17.8px;color:#2b2b2b;font-weight:700;">40</span>
<div style="left:923.2px;top:1526.3px;width:181px;height:100px;background:linear-gradient(#a4a4a4 0%,#8a8a8a 30%,#6e6e6e 65%,#575757 100%);border-radius:7px;"></div>
<div style="left:931.2px;top:1534.2px;width:165px;height:59.2px;background:#808080;border-radius:6px;box-shadow:inset 0 2px 3px rgba(255,255,255,.16), inset 0 -1px 2px rgba(0,0,0,.15);"></div>
<span class="t" style="left:1003.89px;top:1605px;font-size:17.8px;color:#2b2b2b;font-weight:700;">50</span>
<div style="left:1107.5px;top:1526.3px;width:181px;height:100px;background:linear-gradient(#a4a4a4 0%,#8a8a8a 30%,#6e6e6e 65%,#575757 100%);border-radius:7px;"></div>
<div style="left:1115.5px;top:1534.2px;width:165px;height:59.2px;background:#999999;border-radius:6px;box-shadow:inset 0 2px 3px rgba(255,255,255,.16), inset 0 -1px 2px rgba(0,0,0,.15);"></div>
<span class="t" style="left:1188.14px;top:1605px;font-size:17.8px;color:#2b2b2b;font-weight:700;">60</span>
<div style="left:1291.8px;top:1526.3px;width:181px;height:100px;background:linear-gradient(#a4a4a4 0%,#8a8a8a 30%,#6e6e6e 65%,#575757 100%);border-radius:7px;"></div>
<div style="left:1299.8px;top:1534.2px;width:165px;height:59.2px;background:#b2b2b2;border-radius:6px;box-shadow:inset 0 3px 3px -1px rgba(0,0,0,.22), inset 0 -1px 2px rgba(0,0,0,.12);"></div>
<span class="t" style="left:1372.39px;top:1605px;font-size:17.8px;color:#2b2b2b;font-weight:700;">70</span>
<div style="left:1476.1px;top:1526.3px;width:181px;height:100px;background:linear-gradient(#a4a4a4 0%,#8a8a8a 30%,#6e6e6e 65%,#575757 100%);border-radius:7px;"></div>
<div style="left:1484.1px;top:1534.2px;width:165px;height:59.2px;background:#cccccc;border-radius:6px;box-shadow:inset 0 3px 3px -1px rgba(0,0,0,.22), inset 0 -1px 2px rgba(0,0,0,.12);"></div>
<span class="t" style="left:1556.78px;top:1605px;font-size:17.8px;color:#2b2b2b;font-weight:700;">80</span>
<div style="left:1660.4px;top:1526.3px;width:181px;height:100px;background:linear-gradient(#a4a4a4 0%,#8a8a8a 30%,#6e6e6e 65%,#575757 100%);border-radius:7px;"></div>
<div style="left:1668.4px;top:1534.2px;width:165px;height:59.2px;background:#e6e6e6;border-radius:6px;box-shadow:inset 0 3px 3px -1px rgba(0,0,0,.22), inset 0 -1px 2px rgba(0,0,0,.12);"></div>
<span class="t" style="left:1741.06px;top:1605px;font-size:17.8px;color:#2b2b2b;font-weight:700;">90</span>
<div style="left:1844.7px;top:1526.3px;width:181px;height:100px;background:linear-gradient(#1c1c1c,#2e2e2e);border-radius:7px;"></div>
<div style="left:1852.7px;top:1534.2px;width:165px;height:59.2px;background:#ffffff;border-radius:6px;"></div>
<span class="t" style="left:1920.16px;top:1605px;font-size:17.8px;color:#fff;font-weight:700;">100</span>
<div style="left:0px;top:1626.3px;width:2560px;height:2px;background:#2b2b2b;"></div>
<div style="left:2030.2px;top:1526.3px;width:78.6px;height:29.4px;background:linear-gradient(#adadad 0%,#868686 52%,#656565 100%);border-radius:7px 7px 0 0;"></div>
<div style="left:2030.2px;top:1557.3px;width:78.6px;height:69px;background:linear-gradient(#8c8c8c,#5e5e5e);border-radius:0 0 7px 7px;"></div>
<div style="left:2044.3px;top:1566.5px;width:49px;height:49px;box-sizing:border-box;border:3px solid #222;border-radius:8px;background:linear-gradient(#8f8f8f,#9a9a9a 50%,#858585);box-shadow:0 0 2px rgba(0,0,0,.6);"></div>
<div style="left:2058.4px;top:1581px;width:22.2px;height:21.8px;background:linear-gradient(#222,#000 55%);"></div>
<div style="left:2110.4px;top:1526.3px;width:75.6px;height:48.9px;background:linear-gradient(#adadad 0%,#868686 52%,#656565 100%);border-radius:7px 0 0 0;"></div>
<div style="left:2187px;top:1526.3px;width:73px;height:48.9px;background:linear-gradient(#adadad 0%,#868686 52%,#656565 100%);"></div>
<div style="left:2261px;top:1526.3px;width:73px;height:48.9px;background:linear-gradient(#adadad 0%,#868686 52%,#656565 100%);"></div>
<div style="left:2335px;top:1526.3px;width:72.6px;height:48.9px;background:linear-gradient(#adadad 0%,#868686 52%,#656565 100%);"></div>
<div style="left:2408.7px;top:1526.3px;width:72.8px;height:48.9px;background:linear-gradient(#adadad 0%,#868686 52%,#656565 100%);"></div>
<div style="left:2481.6px;top:1526.3px;width:79px;height:48.9px;background:linear-gradient(#444,#343434);"></div>
<div style="left:2110.4px;top:1577.1px;width:223.4px;height:48.8px;background:linear-gradient(#b2b2b2 0%,#9a9a9a 25%,#7c7c7c 60%,#686868 100%);border-radius:7px 0 0 7px;"></div>
<div style="left:2335px;top:1577.1px;width:222.2px;height:48.8px;background:linear-gradient(#b2b2b2 0%,#9a9a9a 25%,#7c7c7c 60%,#686868 100%);border-radius:0 7px 7px 0;"></div>
<svg style="left:2030px;top:1526px" width="530" height="102" viewBox="2030 1526 530 102">
<defs><linearGradient id="ic" x1="0" y1="0" x2="0" y2="1"><stop offset="0" stop-color="#6c6c6c"/><stop offset="1" stop-color="#9e9e9e"/></linearGradient>
<linearGradient id="icd" x1="0" y1="0" x2="0" y2="1"><stop offset="0" stop-color="#2b2b2b"/><stop offset="1" stop-color="#3f3f3f"/></linearGradient></defs>
<circle cx="2069.3" cy="1541.5" r="11.5" fill="url(#ic)"/><path d="M2061.5,1545 H2077 L2069.3,1537 Z" fill="#333"/>
<circle cx="2147.8" cy="1550.3" r="15.8" fill="url(#ic)"/><rect x="2141.2" y="1543.7" width="13.2" height="13.2" fill="#333"/>
<circle cx="2223" cy="1550.3" r="15.8" fill="url(#ic)"/><path d="M2218,1542 L2231.5,1550.3 L2218,1558.6 Z" fill="#333"/>
<circle cx="2297.6" cy="1550.3" r="15.8" fill="url(#ic)"/>
<path d="M2292.6,1544.6 H2288.9 V1559.2 H2292.6 M2302.4,1544.6 H2306.1 V1559.2 H2302.4" fill="none" stroke="#2e2e2e" stroke-width="3"/><path d="M2293.2,1550 H2295.3 M2299.2,1550 H2301.3" stroke="#2e2e2e" stroke-width="2.2"/>
<circle cx="2371" cy="1550.3" r="15.8" fill="url(#ic)"/>
<path d="M2371,1550.3 C2368.5,1546.3 2366,1545.3 2364.3,1545.3 C2361.6,1545.3 2360,1547.6 2360,1550.3 C2360,1553 2361.6,1555.3 2364.3,1555.3 C2366,1555.3 2368.5,1554.3 2371,1550.3 C2373.5,1546.3 2376,1545.3 2377.7,1545.3 C2380.4,1545.3 2382,1547.6 2382,1550.3 C2382,1553 2380.4,1555.3 2377.7,1555.3 C2376,1555.3 2373.5,1554.3 2371,1550.3 Z" fill="none" stroke="#333" stroke-width="2.6"/>
<circle cx="2445" cy="1550.3" r="15.8" fill="url(#ic)"/>
<g fill="none" stroke="#2e2e2e" stroke-width="3.6"><path d="M2437.6,1548.9 A7.7,7.7 0 0 1 2450.3,1544.8"/><path d="M2452.4,1551.7 A7.7,7.7 0 0 1 2439.7,1555.8"/></g>
<path d="M2454.4,1541.4 V1549.6 H2446.2 Z M2435.6,1559.2 V1551 H2443.8 Z" fill="#2e2e2e"/>
<circle cx="2520.3" cy="1550.6" r="16.6" fill="url(#icd)"/>
<circle cx="2160.8" cy="1602" r="16" fill="url(#ic)"/><path d="M2160,1595 L2153.5,1602 L2160,1609 M2167.5,1595 L2161,1602 L2167.5,1609" fill="none" stroke="#333" stroke-width="2.2"/>
<circle cx="2510" cy="1602" r="16" fill="url(#ic)"/><path d="M2503.5,1595 L2510,1602 L2503.5,1609 M2511,1595 L2517.5,1602 L2511,1609" fill="none" stroke="#333" stroke-width="2.2"/>
</svg>
<span class="t" style="left:2202.24px;top:1585px;font-size:36.6px;color:#2e2e2e;transform:scaleX(1.0544);text-shadow:0 0 2px rgba(40,40,40,.6);">Back</span>
<span class="t" style="left:2377.07px;top:1585px;font-size:36.6px;color:#2e2e2e;transform:scaleX(1.1751);text-shadow:0 0 2px rgba(40,40,40,.6);">Next</span>
<div style="left:2553px;top:94px;width:7px;height:1534px;background:linear-gradient(to right,rgba(14,14,14,0),rgba(14,14,14,.55) 50%,rgba(14,14,14,.97));"></div>
</div></body></html>
